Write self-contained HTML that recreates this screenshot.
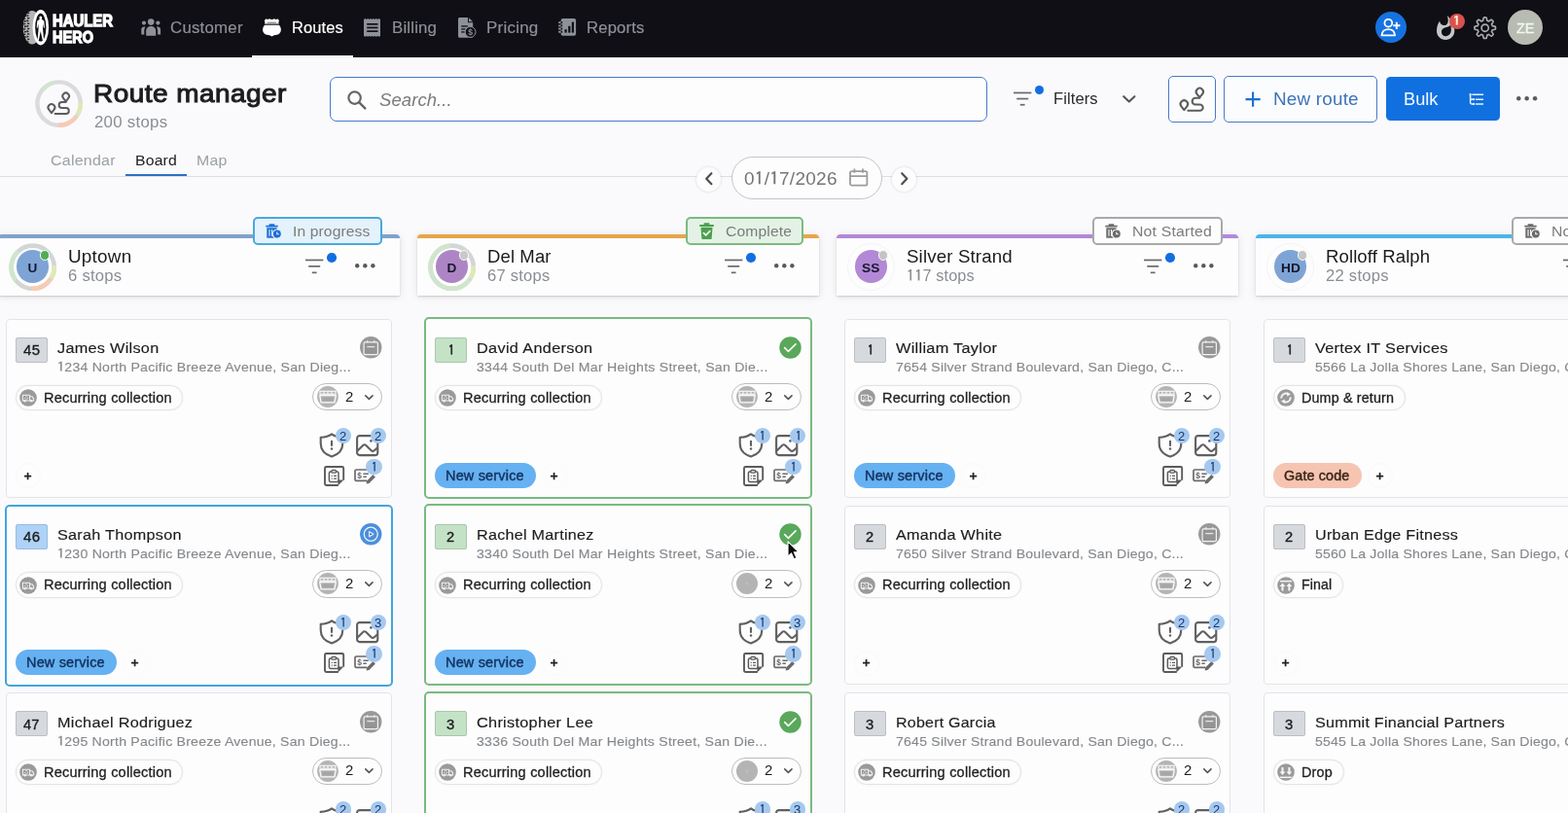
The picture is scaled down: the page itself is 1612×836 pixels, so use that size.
<!DOCTYPE html><html lang="en"><head><meta charset="utf-8"><title>Route manager</title><style>
*{margin:0;padding:0}
html,body{width:1612px;height:836px;overflow:hidden;background:#fafafc}
body{position:relative;font-family:"Liberation Sans",sans-serif;-webkit-font-smoothing:antialiased}
#app{position:absolute;left:0;top:0;width:1612px;height:836px;overflow:hidden;will-change:transform}
.b,.t,.ic{position:absolute;display:block}
.b{box-sizing:content-box}
.ic{overflow:visible}
.t{white-space:pre;line-height:1;font-weight:normal;transform-origin:0 50%}
h1.t,h2.t,h3.t{font-weight:normal}
.lg{font-weight:bold;color:#fff;-webkit-text-stroke:1.3px #fff;letter-spacing:0}
.card{background:#fdfdfe;box-sizing:border-box}
.o{font-family:"IPAGothic","Liberation Sans",sans-serif;font-style:inherit;line-height:0;-webkit-text-stroke-width:calc(var(--sw,0px) + .25px)}
.navi{text-decoration:none}
</style></head><body><div id="app"><nav class="b" style="left:0;top:0;width:1612px;height:59px;background:#0f0f15"><div class="b logo" style="left:0;top:0;width:130px;height:59px"><svg class="ic" style="left:23px;top:9px" width="28" height="38" viewBox="0 0 28 38">
<ellipse cx="10" cy="19.200" rx="9.200" ry="17.300" fill="#b4b4b4"/>
<g fill="#0f0f15"><path d="M1.3 3.6l2.500 1.150l-2.500 1.150z"/><path d="M5.3 3.2l2.500 1.150l-2.500 1.150z"/><path d="M2.1 6.300000000000001l2.500 1.150l-2.500 1.150z"/><path d="M4.5 5.9l2.500 1.150l-2.500 1.150z"/><path d="M1.3 9.0l2.500 1.150l-2.500 1.150z"/><path d="M5.3 8.600000000000001l2.500 1.150l-2.500 1.150z"/><path d="M2.1 11.700000000000001l2.500 1.150l-2.500 1.150z"/><path d="M4.5 11.3l2.500 1.150l-2.500 1.150z"/><path d="M1.3 14.4l2.500 1.150l-2.500 1.150z"/><path d="M5.3 14.0l2.500 1.150l-2.500 1.150z"/><path d="M2.1 17.1l2.500 1.150l-2.500 1.150z"/><path d="M4.5 16.7l2.500 1.150l-2.500 1.150z"/><path d="M1.3 19.800000000000004l2.500 1.150l-2.500 1.150z"/><path d="M5.3 19.400000000000002l2.500 1.150l-2.500 1.150z"/><path d="M2.1 22.500000000000004l2.500 1.150l-2.500 1.150z"/><path d="M4.5 22.1l2.500 1.150l-2.500 1.150z"/><path d="M1.3 25.200000000000003l2.500 1.150l-2.500 1.150z"/><path d="M5.3 24.8l2.500 1.150l-2.500 1.150z"/><path d="M2.1 27.900000000000002l2.500 1.150l-2.500 1.150z"/><path d="M4.5 27.5l2.500 1.150l-2.500 1.150z"/><path d="M1.3 30.6l2.500 1.150l-2.500 1.150z"/><path d="M5.3 30.2l2.500 1.150l-2.500 1.150z"/><path d="M2.1 33.300000000000004l2.500 1.150l-2.500 1.150z"/><path d="M4.5 32.900000000000006l2.500 1.150l-2.500 1.150z"/></g>
<ellipse cx="18.800" cy="19.200" rx="8.300" ry="18.200" fill="#fff"/>
<ellipse cx="18.800" cy="19.200" rx="5.600" ry="14.400" fill="#0f0f15"/>
<path transform="translate(18.800 7.600) scale(.92 1.150) translate(-18.700 -7.800)" d="M18.700 7.800c.9 0 1.500 .7 1.500 1.600c0 .6-.2 1.100-.6 1.400c1.500 .3 2.500 .9 3 1.800l.6 5.600l-1 .2l-.8-3.700l-.3 4.400l1.200 10.400h-1.500l-2.100-8.400l-2.100 8.400h-1.500l1.200-10.400l-.3-4.400l-.8 3.700l-1-.2l.6-5.600c.5-.9 1.500-1.500 3-1.800c-.4-.3-.6-.8-.6-1.400c0-.9 .6-1.600 1.500-1.600z" fill="#fff"/>
</svg><span class="t lg" style="left:53.500px;top:12px;line-height:19px;font-size:16.700px;transform:scaleX(0.890)">HAULER</span><span class="t lg" style="left:53.500px;top:29px;line-height:19px;font-size:16.900px;transform:scaleX(0.860)">HERO</span></div><a class="navi"><svg class="ic" style="left:144.8px;top:19.3px" width="20.4" height="18" viewBox="0 0 20.4 18" ><circle cx="10.2" cy="3.6" r="3.3" fill="#8f9198"/><path d="M5.2 17.8v-5.1c0-2.7 2.2-4.6 5-4.6s5 1.9 5 4.6v5.1z" fill="#8f9198"/><circle cx="3" cy="4.6" r="2.1" fill="#8f9198"/><circle cx="17.4" cy="4.6" r="2.1" fill="#8f9198"/><path d="M0.3 16.4v-5.2c0-1.7 1.2-2.8 2.9-2.8c.5 0 1 .1 1.400 .3c-.8 1-1.300 2.400-1.300 4v3.700z" fill="#8f9198"/><path d="M20.100 16.400v-5.200c0-1.700-1.200-2.800-2.900-2.800c-.5 0-1 .1-1.400 .3c.8 1 1.300 2.400 1.300 4v3.700z" fill="#8f9198"/></svg><span class="t" style="left:175.20px;top:19px;line-height:18px;font-size:16.3px;color:#8f9198;letter-spacing:0.201px;transform:scaleX(1.0353);-webkit-text-stroke:0.15px #8f9198;--sw:0.15px;">Customer</span></a><a class="navi"><svg class="ic" style="left:270px;top:18.7px" width="19" height="18.5" viewBox="0 0 19 18.5" ><path d="M3.6 0.300c1 .9 2.300 .9 3.300 0c1.600 1.100 3.500 1.100 5.100 0c1 .9 2.300 .9 3.300 0l1.800 1.900c-.9 1-.9 2.200-.2 3.300h-15c.7-1.100 .7-2.300-.2-3.300z" fill="#fff"/><rect x="4.800" y="3.600" width="9.200" height="1.900" fill="#9a9a9a"/><path d="M2 6.700h15c2.700 3.300 2.500 7.400-.6 9.500c-2.100 .9-4.700 .7-6.900 2.200c-2.200-1.500-4.800-1.300-6.900-2.200c-3.100-2.100-3.300-6.200-.6-9.500z" fill="#fff"/></svg><span class="t" style="left:300.00px;top:19px;line-height:18px;font-size:16.3px;color:#ffffff;letter-spacing:0.076px;transform:scaleX(1.0134);-webkit-text-stroke:0.15px #ffffff;--sw:0.15px;">Routes</span></a><a class="navi"><svg class="ic" style="left:374.1px;top:18.8px" width="17" height="18.8" viewBox="0 0 17 18.8" ><path d="M0 0.9 L1.42 0 L2.83 0.9 L4.25 0 L5.67 0.9 L7.08 0 L8.50 0.9 L9.92 0 L11.33 0.9 L12.75 0 L14.17 0.9 L15.58 0 L17.00 0.9 L17 17.9 L15.58 18.8 L14.17 17.9 L12.75 18.8 L11.33 17.9 L9.92 18.8 L8.50 17.9 L7.08 18.8 L5.67 17.9 L4.25 18.8 L2.83 17.9 L1.42 18.8 L0.00 17.9 Z" fill="#8f9198"/><rect x="3.200" y="5" width="11.300" height="1.700" fill="#0f0f15"/><rect x="3.200" y="8.600" width="11.300" height="1.700" fill="#0f0f15"/><rect x="3.200" y="12.300" width="11.300" height="1.700" fill="#0f0f15"/></svg><span class="t" style="left:403.30px;top:19px;line-height:18px;font-size:16.3px;color:#8f9198;letter-spacing:0.15px;transform:scaleX(1.0375);-webkit-text-stroke:0.15px #8f9198;--sw:0.15px;">Billing</span></a><a class="navi"><svg class="ic" style="left:471.3px;top:18px" width="18.6" height="21" viewBox="0 0 18.600 21" ><path d="M1.500 0h8.500v5.200h5.200v14c0 .8-.7 1.500-1.500 1.500h-12.200c-.8 0-1.500-.7-1.500-1.500v-17.700c0-.8 .7-1.500 1.500-1.500z" fill="#8f9198"/><path d="M11 0.300l4 4h-4z" fill="#8f9198"/><rect x="3.200" y="8.300" width="6.600" height="1.300" fill="#0f0f15"/><rect x="3.200" y="11.300" width="4.200" height="1.300" fill="#0f0f15"/><rect x="3.200" y="14.300" width="3.600" height="1.300" fill="#0f0f15"/><circle cx="12.600" cy="14.900" r="5.400" fill="#0f0f15" stroke="#8f9198" stroke-width="1"/><text x="12.600" y="18.100" font-family="Liberation Sans, sans-serif" font-weight="bold" font-size="8.500" text-anchor="middle" fill="#8f9198">$</text></svg><span class="t" style="left:499.80px;top:19px;line-height:18px;font-size:16.3px;color:#8f9198;letter-spacing:0.203px;transform:scaleX(1.0448);-webkit-text-stroke:0.15px #8f9198;--sw:0.15px;">Pricing</span></a><a class="navi"><svg class="ic" style="left:573.5px;top:19.3px" width="18.1" height="17.8" viewBox="0 0 18.100 17.800" ><rect x="2.600" y="0" width="15.500" height="17.800" rx="2" fill="#8f9198"/><rect x="0" y="3.2" width="3.400" height="1.900" rx="0.900" fill="#8f9198"/><rect x="2.600" y="3.2" width="1.600" height="1.900" fill="#0f0f15"/><rect x="0" y="6.4" width="3.400" height="1.900" rx="0.900" fill="#8f9198"/><rect x="2.600" y="6.4" width="1.600" height="1.900" fill="#0f0f15"/><rect x="0" y="9.6" width="3.400" height="1.900" rx="0.900" fill="#8f9198"/><rect x="2.600" y="9.6" width="1.600" height="1.900" fill="#0f0f15"/><rect x="0" y="12.8" width="3.400" height="1.900" rx="0.900" fill="#8f9198"/><rect x="2.600" y="12.8" width="1.600" height="1.900" fill="#0f0f15"/><rect x="6.500" y="11.200" width="2.200" height="3.400" fill="#0f0f15"/><rect x="10.200" y="7.800" width="2.200" height="6.800" fill="#0f0f15"/><rect x="13.800" y="3.600" width="2.200" height="11" fill="#0f0f15"/></svg><span class="t" style="left:603.20px;top:19px;line-height:18px;font-size:16.3px;color:#8f9198;letter-spacing:0.137px;transform:scaleX(1.0260);-webkit-text-stroke:0.15px #8f9198;--sw:0.15px;">Reports</span></a><div class="b" style="left:259px;top:57px;width:104px;height:3px;background:#f7f7f9"></div><svg class="ic" style="left:1414.4px;top:12px" width="32" height="32" viewBox="0 0 32 32" ><circle cx="16" cy="16" r="16" fill="#1672e0"/><circle cx="13.300" cy="11.700" r="3.900" fill="none" stroke="#fff" stroke-width="1.800"/><path d="M6.500 24.400c.4-4 3.200-6.200 6.800-6.200s6.400 2.200 6.800 6.200z" fill="none" stroke="#fff" stroke-width="1.800" stroke-linejoin="round"/><path d="M21.800 10.700v7.200M18.200 14.300h7.200" stroke="#fff" stroke-width="1.900" fill="none"/></svg><svg class="ic" style="left:1476.8px;top:16px" width="18.3" height="25" viewBox="0 0 18.300 25" ><path d="M3 5.800C3.500 8.600 5.400 10.100 7.600 10.100C10.400 10.100 12 7.700 11.700 4.400C11.600 2.800 11.300 1.400 10.800 0C14.400 3.400 18.300 8.600 18.300 15.800C18.300 21 14.200 25 9.150 25C4.100 25 0 21 0 15.800C0 11.600 1.400 8.200 3 5.800ZM9.400 21.200C6.800 21.200 4.900 19.400 4.900 17C4.900 14.400 6.700 12.700 9.800 12.100C11.600 11.700 13.200 10.900 14.300 9.700C14.700 11.300 14.900 12.900 14.900 14.600C14.900 18.400 12.600 21.200 9.400 21.200Z" fill="#c3c7c7" fill-rule="evenodd"/></svg><div class="b" style="left:1490px;top:13.5px;width:16.2px;height:16.2px;background:#d8524c;border-radius:50%"></div><span class="t" style="left:1493.80px;top:14px;line-height:15px;font-size:13px;color:#fff4e0;transform:scaleX(1.0646);-webkit-text-stroke:0.3px #fff4e0;--sw:0.3px;"><i class="o">1</i></span><svg class="ic" style="left:1515.2px;top:16.5px" width="23.4" height="23.4" viewBox="0 0 24 24" ><path d="M12.00 0.95L12.43 0.96L12.87 0.98L13.30 1.03L13.61 1.81L13.85 2.68L14.03 3.55L14.16 4.35L14.46 4.44L14.75 4.54L15.04 4.66L15.33 4.78L15.61 4.92L15.89 5.06L16.54 4.59L17.28 4.10L18.06 3.66L18.84 3.32L19.18 3.60L19.50 3.89L19.81 4.19L20.11 4.50L20.40 4.82L20.68 5.16L20.34 5.94L19.90 6.72L19.41 7.46L18.94 8.11L19.08 8.39L19.22 8.67L19.34 8.96L19.46 9.25L19.56 9.54L19.65 9.84L20.45 9.97L21.32 10.15L22.19 10.39L22.97 10.70L23.02 11.13L23.04 11.57L23.05 12.00L23.04 12.43L23.02 12.87L22.97 13.30L22.19 13.61L21.32 13.85L20.45 14.03L19.65 14.16L19.56 14.46L19.46 14.75L19.34 15.04L19.22 15.33L19.08 15.61L18.94 15.89L19.41 16.54L19.90 17.28L20.34 18.06L20.68 18.84L20.40 19.18L20.11 19.50L19.81 19.81L19.50 20.11L19.18 20.40L18.84 20.68L18.06 20.34L17.28 19.90L16.54 19.41L15.89 18.94L15.61 19.08L15.33 19.22L15.04 19.34L14.75 19.46L14.46 19.56L14.16 19.65L14.03 20.45L13.85 21.32L13.61 22.19L13.30 22.97L12.87 23.02L12.43 23.04L12.00 23.05L11.57 23.04L11.13 23.02L10.70 22.97L10.39 22.19L10.15 21.32L9.97 20.45L9.84 19.65L9.54 19.56L9.25 19.46L8.96 19.34L8.67 19.22L8.39 19.08L8.11 18.94L7.46 19.41L6.72 19.90L5.94 20.34L5.16 20.68L4.82 20.40L4.50 20.11L4.19 19.81L3.89 19.50L3.60 19.18L3.32 18.84L3.66 18.06L4.10 17.28L4.59 16.54L5.06 15.89L4.92 15.61L4.78 15.33L4.66 15.04L4.54 14.75L4.44 14.46L4.35 14.16L3.55 14.03L2.68 13.85L1.81 13.61L1.03 13.30L0.98 12.87L0.96 12.43L0.95 12.00L0.96 11.57L0.98 11.13L1.03 10.70L1.81 10.39L2.68 10.15L3.55 9.97L4.35 9.84L4.44 9.54L4.54 9.25L4.66 8.96L4.78 8.67L4.92 8.39L5.06 8.11L4.59 7.46L4.10 6.72L3.66 5.94L3.32 5.16L3.60 4.82L3.89 4.50L4.19 4.19L4.50 3.89L4.82 3.60L5.16 3.32L5.94 3.66L6.72 4.10L7.46 4.59L8.11 5.06L8.39 4.92L8.67 4.78L8.96 4.66L9.25 4.54L9.54 4.44L9.84 4.35L9.97 3.55L10.15 2.68L10.39 1.81L10.70 1.03L11.13 0.98L11.57 0.96Z" fill="none" stroke="#a9adad" stroke-width="1.700" stroke-linejoin="round"/><circle cx="12" cy="12" r="3.700" fill="none" stroke="#a9adad" stroke-width="1.700"/></svg><div class="b" style="left:1550.3px;top:9.6px;width:36px;height:36px;background:#b7bbb2;border-radius:50%"></div><span class="t" style="left:1559.25px;top:21px;line-height:16px;font-size:14.8px;color:#f1f8ec;letter-spacing:-0.106px;transform:scaleX(0.9835);-webkit-text-stroke:0.3px #f1f8ec;--sw:0.3px;">ZE</span></nav><header class="b" style="left:0;top:59px;width:1612px;height:150px"><svg class="ic" style="left:33.90px;top:20.60px;filter:blur(.35px)" width="53.2" height="53.2" viewBox="0 0 53.2 53.2"><circle cx="26.6" cy="26.6" r="22.2" fill="none" stroke="#d9dbdc" stroke-width="4.4"/><path d="M10.10 11.75A22.2 22.2 0 0 1 19.74 5.49" fill="none" stroke="#cfe6cc" stroke-width="4.4"/><path d="M48.79 25.83A22.2 22.2 0 0 1 45.83 37.70" fill="none" stroke="#e0e9b4" stroke-width="4.4"/><path d="M44.56 39.65A22.2 22.2 0 0 1 25.83 48.79" fill="none" stroke="#f8cbb4" stroke-width="4.4"/></svg><svg class="ic" style="left:48.2px;top:34.8px" width="24" height="24" viewBox="0 0 24 24" ><g fill="none" stroke="#5c5c5c" stroke-width="2.0" stroke-linecap="round" stroke-linejoin="round"><path d="M4.95 22.19L7.66 18.73A3.45 3.45 0 1 0 2.24 18.73Z"/><path d="M19.70 10.33L22.34 6.97A3.35 3.35 0 1 0 17.06 6.97Z"/><path d="M19.700 10.900H15.700a3.100 3.100 0 0 0 0 6.200H19.900a2.900 2.900 0 0 1 0 5.800H8.600"/></g></svg><h1 class="t" style="left:96.00px;top:22px;line-height:30px;font-size:26.6px;color:#1d1d1f;letter-spacing:0.454px;transform:scaleX(1.0507);-webkit-text-stroke:1.05px #1d1d1f;--sw:1.05px;">Route manager</h1><span class="t" style="left:97.20px;top:58px;line-height:17px;font-size:15.9px;color:#8a8e93;letter-spacing:0.273px;transform:scaleX(1.0564);">200 stops</span><div class="b" style="left:339px;top:20px;width:676px;height:46px;background:#fdfdfe;border:1px solid #4a7ac6;border-radius:7px;box-sizing:border-box"></div><svg class="ic" style="left:357.3px;top:33.599999999999994px" width="19.5" height="19.5" viewBox="0 0 19.500 19.500" ><circle cx="7.600" cy="7.600" r="6.200" fill="none" stroke="#666" stroke-width="2.200"/><path d="M12.300 12.300l6 6" stroke="#666" stroke-width="2.500" stroke-linecap="round"/></svg><span class="t" style="left:389.80px;top:33px;line-height:21px;font-size:18.27px;color:#7b7b7b;letter-spacing:0.073px;transform:scaleX(1.0136);font-style:italic;">Search...</span><svg class="ic" style="left:1041.7px;top:34.8px" width="18.4" height="16" viewBox="0 0 18.400 16" ><rect x="0" y="0.6" width="18.400" height="1.700" fill="#6a6a6a"/><rect x="3.200" y="6.7" width="12" height="1.700" fill="#6a6a6a"/><rect x="6.800" y="12.9" width="4.800" height="1.700" fill="#6a6a6a"/></svg><div class="b" style="left:1063.9px;top:28.599999999999994px;width:9.6px;height:9.6px;background:#126ee0;border-radius:50%"></div><span class="t" style="left:1083.00px;top:33px;line-height:18px;font-size:16.24px;color:#2a2a2a;letter-spacing:0.079px;transform:scaleX(1.0192);">Filters</span><svg class="ic" style="left:1154.2px;top:38.599999999999994px" width="13.6" height="7.8" viewBox="0 0 13.300 7.600" ><path d="M1.200 1.200l5.450 5.200l5.450-5.200" fill="none" stroke="#555" stroke-width="2.1" stroke-linecap="round" stroke-linejoin="round"/></svg><div class="b" style="left:1201px;top:19px;width:48.5px;height:48px;border:1px solid #4a7ac6;border-radius:5px;box-sizing:border-box;background:#fbfcfd"></div><svg class="ic" style="left:1212.2px;top:30.400000000000006px" width="26" height="26" viewBox="0 0 24 24" ><g fill="none" stroke="#5c5c5c" stroke-width="1.9" stroke-linecap="round" stroke-linejoin="round"><path d="M4.95 22.19L7.66 18.73A3.45 3.45 0 1 0 2.24 18.73Z"/><path d="M19.70 10.33L22.34 6.97A3.35 3.35 0 1 0 17.06 6.97Z"/><path d="M19.700 10.900H15.700a3.100 3.100 0 0 0 0 6.200H19.900a2.900 2.900 0 0 1 0 5.800H8.600"/></g></svg><div class="b" style="left:1258px;top:19px;width:157.5px;height:48px;border:1px solid #4a7ac6;border-radius:5px;box-sizing:border-box;background:#fbfcfd"></div><svg class="ic" style="left:1279.6px;top:34.7px" width="16.2" height="16.2" viewBox="0 0 16 16" ><path d="M8 0.500v15M0.500 8h15" stroke="#1a6fd8" stroke-width="2.1" fill="none"/></svg><span class="t" style="left:1308.80px;top:32px;line-height:21px;font-size:18.27px;color:#3d73b8;letter-spacing:0.196px;transform:scaleX(1.0328);">New route</span><div class="b" style="left:1424.8px;top:20px;width:117.6px;height:44.6px;background:#1170e0;border-radius:4.500px"></div><span class="t" style="left:1443.30px;top:32px;line-height:21px;font-size:18.27px;color:#f3f8ff;letter-spacing:-0.015px;transform:scaleX(0.9975);">Bulk</span><svg class="ic" style="left:1510.2px;top:36.599999999999994px" width="15.4" height="12" viewBox="0 0 15.400 12" ><g fill="none" stroke="#e6f1ff" stroke-width="1.500" stroke-linecap="round"><path d="M1.600 0.900v8.600a1.400 1.400 0 0 0 1.400 1.400h1.600M1.600 4.800a1.400 1.400 0 0 0 1.400 1.400h1.600"/><path d="M3.900 1.300h10.600M7.400 6.200h7.100M7.400 10.900h7.100"/></g><circle cx="5" cy="6.200" r="1.150" fill="#e6f1ff"/><circle cx="5" cy="10.900" r="1.150" fill="#e6f1ff"/><circle cx="1.600" cy="1" r="1.100" fill="#e6f1ff"/></svg><svg class="ic" style="left:1559px;top:40.099999999999994px" width="21.3" height="4.5" viewBox="0 0 21.3 4.5" ><circle cx="2.25" cy="2.25" r="2.25" fill="#5a5a5a"/><circle cx="10.65" cy="2.25" r="2.25" fill="#5a5a5a"/><circle cx="19.05" cy="2.25" r="2.25" fill="#5a5a5a"/></svg><div class="b" style="left:0px;top:122px;width:1612px;height:1px;background:#dcdee1"></div><span class="t" style="left:52.10px;top:97px;line-height:17px;font-size:15.3px;color:#9ba0a5;letter-spacing:0.221px;transform:scaleX(1.0447);">Calendar</span><span class="t" style="left:138.70px;top:97px;line-height:17px;font-size:15.3px;color:#222;letter-spacing:0.168px;transform:scaleX(1.0319);">Board</span><span class="t" style="left:201.60px;top:97px;line-height:17px;font-size:15.3px;color:#9ba0a5;letter-spacing:0.248px;transform:scaleX(1.0390);">Map</span><div class="b" style="left:129px;top:120px;width:63px;height:2.4px;background:#2f6fc4"></div><div class="b" style="left:716.4px;top:112.5px;width:25px;height:25px;background:#fdfdfd;border-radius:50%;box-shadow:0 0 3px rgba(0,0,0,.16)"></div><svg class="ic" style="left:724.6px;top:118.4px" width="7.6" height="13.4" viewBox="0 0 7.600 13.400" ><path d="M6.400 1.200l-5.200 5.500l5.200 5.500" fill="none" stroke="#505050" stroke-width="2.200" stroke-linecap="round" stroke-linejoin="round"/></svg><div class="b" style="left:751.5px;top:102.30000000000001px;width:155.5px;height:43.8px;background:#fdfdfd;border:1px solid #c4c4c4;border-radius:22px;box-sizing:border-box"></div><span class="t" style="left:765.00px;top:114px;line-height:21px;font-size:18.27px;color:#767676;letter-spacing:0.245px;transform:scaleX(1.0429);">0<i class="o">1</i>/<i class="o">1</i>7/2026</span><svg class="ic" style="left:872.6px;top:114.30000000000001px" width="19.4" height="18.7" viewBox="0 0 19.400 18.700" ><rect x="1" y="3.100" width="17.400" height="14.600" rx="1.800" fill="none" stroke="#9c9c9c" stroke-width="1.800"/><path d="M1 8.200h17.400M5.400 0.600v4.200M14 0.600v4.200" stroke="#9c9c9c" stroke-width="1.800" fill="none"/></svg><div class="b" style="left:916.9px;top:112.5px;width:25px;height:25px;background:#fdfdfd;border-radius:50%;box-shadow:0 0 3px rgba(0,0,0,.16)"></div><svg class="ic" style="left:926px;top:118.4px" width="7.6" height="13.4" viewBox="0 0 7.600 13.400" ><path d="M1.200 1.200l5.200 5.500l-5.200 5.500" fill="none" stroke="#505050" stroke-width="2.200" stroke-linecap="round" stroke-linejoin="round"/></svg></header><main class="b" style="left:0;top:209px;width:1612px;height:627px"><section class="b col" style="left:-2px;top:0;width:413px;height:627px"><div class="b" style="left:0px;top:32px;width:413px;height:63.3px;background:#fdfdfe;border-radius:4px 4px 0 0;box-shadow:0 1px 2px rgba(0,0,0,.15),0 1px 9px rgba(0,0,0,.1)"></div><div class="b" style="left:0px;top:31.80000000000001px;width:413px;height:4.4px;background:#7fa2cc;border-radius:4px 4px 0 0"></div><svg class="ic" style="left:8.80px;top:38.60px;filter:blur(.35px)" width="53.400000000000006" height="53.400000000000006" viewBox="0 0 53.400000000000006 53.400000000000006"><circle cx="26.700000000000003" cy="26.700000000000003" r="22.1" fill="none" stroke="#d3d5d6" stroke-width="4.6"/><path d="M48.75 25.16A22.1 22.1 0 0 1 45.44 38.41" fill="none" stroke="#e0e9b4" stroke-width="4.6"/><path d="M44.58 39.69A22.1 22.1 0 0 1 25.16 48.75" fill="none" stroke="#f8cbb4" stroke-width="4.6"/><path d="M9.28 40.31A22.1 22.1 0 0 1 11.91 10.28" fill="none" stroke="#cfe6cc" stroke-width="4.6"/></svg><div class="b" style="left:18.8px;top:48.40000000000001px;width:33.4px;height:33.4px;background:#7ea4d6;border-radius:50%"></div><div class="b" style="left:43.0px;top:48.30000000000001px;width:10.4px;height:10.4px;background:#4fae53;border-radius:50%;border:1.500px solid #f8faf8;box-sizing:border-box"></div><span class="t" style="left:30.60px;top:59px;line-height:15px;font-size:13.6px;color:#16182a;font-weight:bold;">U</span><h2 class="t" style="left:72.00px;top:44px;line-height:21px;font-size:18.27px;color:#1b1b1d;letter-spacing:0.223px;transform:scaleX(1.0335);">Uptown</h2><span class="t" style="left:72.20px;top:66px;line-height:17px;font-size:15.9px;color:#8a8e93;letter-spacing:0.227px;transform:scaleX(1.0488);">6 stops</span><svg class="ic" style="left:316.2px;top:56.89999999999998px" width="18.4" height="16" viewBox="0 0 18.400 16" ><rect x="0" y="0.6" width="18.400" height="1.700" fill="#6a6a6a"/><rect x="3.200" y="7.0" width="12" height="1.700" fill="#6a6a6a"/><rect x="6.800" y="13.5" width="4.800" height="1.700" fill="#6a6a6a"/></svg><div class="b" style="left:338.3px;top:51.10000000000002px;width:9.6px;height:9.6px;background:#126ee0;border-radius:50%"></div><svg class="ic" style="left:366.7px;top:62.19999999999999px" width="20.6" height="4.4" viewBox="0 0 20.6 4.4" ><circle cx="2.2" cy="2.2" r="2.2" fill="#5a5a5a"/><circle cx="10.3" cy="2.2" r="2.2" fill="#5a5a5a"/><circle cx="18.4" cy="2.2" r="2.2" fill="#5a5a5a"/></svg><div class="b" style="left:262px;top:13.599999999999994px;width:133px;height:29px;background:#e4f2fb;border:2px solid #49a9dc;border-radius:5px;box-sizing:border-box"></div><svg class="ic" style="left:274.8px;top:20.80000000000001px" width="16.6" height="15.4" viewBox="0 0 16.600 15.400" ><path d="M0.300 2.700h12.400M3.700 1.100h5.600" stroke="#1a6fd8" stroke-width="1.700" fill="none"/><path d="M1.300 4.300h10.400v10.400h-10.400z" fill="#1a6fd8"/><path d="M4 6v6.800M6.600 6v6.800" stroke="#e4f2fb" stroke-width="1.100"/><circle cx="11.800" cy="10.600" r="4.600" fill="#1a6fd8" stroke="#e4f2fb" stroke-width="1.200"/><path d="M11.800 8.400v2.400h2" stroke="#e4f2fb" stroke-width="1.100" fill="none"/></svg><span class="t" style="left:303.40px;top:20px;line-height:17px;font-size:15.22px;color:#7c7c7c;letter-spacing:0.116px;transform:scaleX(1.0257);">In progress</span><article class="b card" style="left:8px;top:119px;width:397px;height:184px;border:1px solid #e2e4e7;border-radius:4px"><div class="b" style="left:9px;top:17.6px;width:33px;height:26.3px;background:#d6dade;border:1px solid #bcbfc3;border-radius:2px;box-sizing:border-box"></div><span class="t" style="left:17.02px;top:23px;line-height:16px;font-size:14.0px;color:#1c1c1e;letter-spacing:0.324px;transform:scaleX(1.0666);-webkit-text-stroke:0.35px #1c1c1e;--sw:0.35px;">45</span><h3 class="t" style="left:51.90px;top:20px;line-height:17px;font-size:15.4px;color:#1d1d1f;letter-spacing:0.274px;transform:scaleX(1.0543);-webkit-text-stroke:0.15px #1d1d1f;--sw:0.15px;">James Wilson</h3><span class="t" style="left:51.90px;top:41px;line-height:15px;font-size:13.4px;color:#85888b;letter-spacing:0.212px;transform:scaleX(1.0546);-webkit-text-stroke:0.12px #85888b;--sw:0.12px;"><i class="o">1</i>234 North Pacific Breeze Avenue, San Dieg...</span><svg class="ic" style="left:363.3px;top:17.1px" width="22.5" height="22.5" viewBox="0 0 22.500 22.500" ><circle cx="11.250" cy="11.250" r="11.200" fill="#999999"/><rect x="4.100" y="5.900" width="14.300" height="12.700" rx="1.300" fill="#949494" stroke="#f3f3f3" stroke-width="1.200"/><path d="M7.300 10.600h8" stroke="#e6e6e6" stroke-width="1.300"/><path d="M7.700 4.300v1.900M14.800 4.300v1.900" stroke="#f0f0f0" stroke-width="1.300"/></svg><div class="b" style="left:9px;top:67.2px;width:172px;height:26.3px;background:#fdfdfd;border:1px solid #e4e4e4;border-radius:14px;box-sizing:border-box;box-shadow:0 0 2px rgba(0,0,0,.08)"></div><svg class="ic" style="left:13.1px;top:71.3px" width="18" height="18" viewBox="0 0 18 18" ><circle cx="9" cy="9" r="8.800" fill="#9a9a9a"/><g fill="none" stroke="#f1f1f1" stroke-width="1.050" stroke-linejoin="round"><path d="M3.400 6.200h7.200v5.800h-7.200z"/><path d="M10.600 7.700h2.300l1.700 2.100v2.200h-4"/></g><circle cx="5.700" cy="12.300" r="1.250" fill="#f1f1f1"/><circle cx="12.300" cy="12.300" r="1.250" fill="#f1f1f1"/><circle cx="7" cy="9.100" r="1.500" fill="none" stroke="#f1f1f1" stroke-width="0.900" stroke-dasharray="1.700 1"/></svg><span class="t" style="left:38.20px;top:72px;line-height:16px;font-size:13.9px;color:#1f1f21;letter-spacing:0.187px;transform:scaleX(1.0483);-webkit-text-stroke:0.3px #1f1f21;--sw:0.3px;">Recurring collection</span><div class="b" style="left:314.2px;top:64.9px;width:71.8px;height:28.6px;background:#fdfdfd;border:1px solid #bbbebe;border-radius:15px;box-sizing:border-box"></div><svg class="ic" style="left:318.8px;top:68.0px" width="22" height="22" viewBox="0 0 22 22" ><circle cx="11" cy="11" r="10.900" fill="#b4b4b4"/><g fill="none" stroke="#fafafa" stroke-width="1.100"><rect x="3" y="5.300" width="16" height="2.900"/><path d="M7 5.300v2.900M11 5.300v2.900M15 5.300v2.900"/></g><path d="M2.700 9.600h16.600l-1.400 7.300h-13.800z" fill="none" stroke="#fafafa" stroke-width="1.300" stroke-linejoin="round"/><rect x="5.400" y="11.400" width="11.200" height="3.900" fill="#a6a6a6"/></svg><span class="t" style="left:347.60px;top:71px;line-height:16px;font-size:14.7px;color:#1d1d1f;transform:scaleX(1.0167);">2</span><svg class="ic" style="left:367.9px;top:76.6px" width="8.8" height="5.2" viewBox="0 0 13.300 7.600" ><path d="M1.200 1.200l5.450 5.200l5.450-5.200" fill="none" stroke="#555" stroke-width="2.5" stroke-linecap="round" stroke-linejoin="round"/></svg><svg class="ic" style="left:321.3px;top:115.9px" width="26" height="25.6" viewBox="0 0 26 25.600" ><path d="M13 1.300c3.200 2.400 6.600 3.200 11.300 3.500v6.200c0 6.200-4.300 11.300-11.300 13.500c-7-2.200-11.300-7.300-11.300-13.500v-6.200c4.700-.3 8.100-1.100 11.300-3.500z" fill="none" stroke="#606060" stroke-width="2.100" stroke-linejoin="round"/><path d="M13 8.800v4.200" stroke="#606060" stroke-width="2.100" stroke-linecap="round"/><circle cx="13" cy="16.600" r="1.250" fill="#606060"/></svg><svg class="ic" style="left:358.6px;top:117.9px" width="23.4" height="22.2" viewBox="0 0 23.400 22.200" ><rect x="1.100" y="1.100" width="21.200" height="20" rx="2.600" fill="none" stroke="#606060" stroke-width="2.100"/><path d="M1.600 16.400l5.800-5.600c.8-.8 1.900-.8 2.700 0l5.300 5.200c1 1 2.400 1.100 3.400 .2l3.300-2.800" fill="none" stroke="#606060" stroke-width="2.100" stroke-linejoin="round"/><circle cx="15.400" cy="6.400" r="1.300" fill="#606060"/></svg><svg class="ic" style="left:326px;top:149.7px" width="21.2" height="21.0" viewBox="0 0 21.200 21" ><path d="M20.200 14.800v-12.400c0-.8-.6-1.400-1.400-1.400h-16.400c-.8 0-1.400 .6-1.400 1.400v16.200c0 .8 .6 1.400 1.400 1.400h12.400" fill="none" stroke="#5a5a5a" stroke-width="1.900"/><path d="M14.400 20.400l6-6h-4.600c-.8 0-1.400 .6-1.400 1.400z" fill="#5a5a5a"/><rect x="5.400" y="6.100" width="9.600" height="10.300" rx="1.400" fill="none" stroke="#5a5a5a" stroke-width="1.500"/><rect x="7.900" y="4.500" width="4.600" height="2.700" rx="1" fill="#fdfdfd" stroke="#5a5a5a" stroke-width="1.300"/><path d="M7.700 10.300h1.100M10 10.300h3M7.700 13.200h1.100M10 13.200h3" stroke="#5a5a5a" stroke-width="1.300"/></svg><svg class="ic" style="left:357.2px;top:152.7px" width="22" height="15.6" viewBox="0 0 22 15.600" ><path d="M13.200 12.300h-11c-.7 0-1.200-.5-1.200-1.200v-8.900c0-.7 .5-1.200 1.200-1.200h15.600c.7 0 1.200 .5 1.200 1.200v2.400" fill="none" stroke="#6a6a6a" stroke-width="1.700"/><text x="5.700" y="9.800" font-family="Liberation Sans, sans-serif" font-weight="bold" font-size="8.500" text-anchor="middle" fill="#6a6a6a">$</text><path d="M9.400 5.300h5.400M9.400 8.300h3.400" stroke="#6a6a6a" stroke-width="1.400"/><path d="M12.600 15.400l.5-2.900l6.400-6.400l2.400 2.400l-6.400 6.400z" fill="#6a6a6a"/></svg><div class="b" style="left:337.7px;top:110.8px;width:16.4px;height:16.4px;background:#a5c8ef;border-radius:50%"></div><span class="t" style="left:342.30px;top:112px;line-height:15px;font-size:13.19px;color:#17386f;transform:scaleX(0.9883);">2</span><div class="b" style="left:373.8px;top:110.8px;width:16.4px;height:16.4px;background:#a5c8ef;border-radius:50%"></div><span class="t" style="left:378.40px;top:112px;line-height:15px;font-size:13.19px;color:#17386f;transform:scaleX(0.9883);">2</span><div class="b" style="left:369.3px;top:143.1px;width:16.4px;height:16.4px;background:#a5c8ef;border-radius:50%"></div><span class="t" style="left:375.00px;top:144px;line-height:15px;font-size:13.19px;color:#17386f;transform:scaleX(0.9000);"><i class="o">1</i></span><div class="b" style="left:9px;top:147.3px;width:26px;height:26px;border-radius:50%;border:1px solid #fafafb;box-sizing:border-box"></div><svg class="ic" style="left:18.4px;top:156.7px" width="7.200" height="7.200" viewBox="0 0 7.200 7.200"><path d="M3.600 0v7.200M0 3.600h7.200" stroke="#222" stroke-width="1.700"/></svg></article><article class="b card" style="left:7px;top:310px;width:399px;height:187px;border:2px solid #41a6de;border-radius:5px"><div class="b" style="left:9px;top:17.8px;width:33px;height:26.3px;background:#aed3f6;border:1px solid #98bce2;border-radius:2px;box-sizing:border-box"></div><span class="t" style="left:16.95px;top:23px;line-height:16px;font-size:14.0px;color:#1c1c1e;letter-spacing:0.354px;transform:scaleX(1.0731);-webkit-text-stroke:0.35px #1c1c1e;--sw:0.35px;">46</span><h3 class="t" style="left:51.90px;top:20px;line-height:17px;font-size:15.4px;color:#1d1d1f;letter-spacing:0.271px;transform:scaleX(1.0507);-webkit-text-stroke:0.15px #1d1d1f;--sw:0.15px;">Sarah Thompson</h3><span class="t" style="left:51.90px;top:41px;line-height:15px;font-size:13.4px;color:#85888b;letter-spacing:0.21px;transform:scaleX(1.0541);-webkit-text-stroke:0.12px #85888b;--sw:0.12px;"><i class="o">1</i>230 North Pacific Breeze Avenue, San Dieg...</span><svg class="ic" style="left:363.3px;top:17.3px" width="22.5" height="22.5" viewBox="0 0 22.500 22.500" ><circle cx="11.250" cy="11.250" r="11.200" fill="#4c8fdc"/><circle cx="11.250" cy="11.250" r="7" fill="none" stroke="#e9f5ff" stroke-width="1.250"/><path d="M9.700 8.700l4.100 2.550l-4.100 2.550z" fill="#2f5f9c" stroke="#e9f5ff" stroke-width="1.200" stroke-linejoin="round"/></svg><div class="b" style="left:9px;top:67.4px;width:172px;height:26.3px;background:#fdfdfd;border:1px solid #e4e4e4;border-radius:14px;box-sizing:border-box;box-shadow:0 0 2px rgba(0,0,0,.08)"></div><svg class="ic" style="left:13.1px;top:71.5px" width="18" height="18" viewBox="0 0 18 18" ><circle cx="9" cy="9" r="8.800" fill="#9a9a9a"/><g fill="none" stroke="#f1f1f1" stroke-width="1.050" stroke-linejoin="round"><path d="M3.400 6.200h7.200v5.800h-7.200z"/><path d="M10.600 7.700h2.300l1.700 2.100v2.200h-4"/></g><circle cx="5.700" cy="12.300" r="1.250" fill="#f1f1f1"/><circle cx="12.300" cy="12.300" r="1.250" fill="#f1f1f1"/><circle cx="7" cy="9.100" r="1.500" fill="none" stroke="#f1f1f1" stroke-width="0.900" stroke-dasharray="1.700 1"/></svg><span class="t" style="left:38.20px;top:72px;line-height:16px;font-size:13.9px;color:#1f1f21;letter-spacing:0.187px;transform:scaleX(1.0483);-webkit-text-stroke:0.3px #1f1f21;--sw:0.3px;">Recurring collection</span><div class="b" style="left:314.2px;top:65.1px;width:71.8px;height:28.6px;background:#fdfdfd;border:1px solid #bbbebe;border-radius:15px;box-sizing:border-box"></div><svg class="ic" style="left:318.8px;top:68.2px" width="22" height="22" viewBox="0 0 22 22" ><circle cx="11" cy="11" r="10.900" fill="#b4b4b4"/><g fill="none" stroke="#fafafa" stroke-width="1.100"><rect x="3" y="5.300" width="16" height="2.900"/><path d="M7 5.300v2.900M11 5.300v2.900M15 5.300v2.900"/></g><path d="M2.700 9.600h16.600l-1.400 7.300h-13.800z" fill="none" stroke="#fafafa" stroke-width="1.300" stroke-linejoin="round"/><rect x="5.400" y="11.400" width="11.200" height="3.900" fill="#a6a6a6"/></svg><span class="t" style="left:347.60px;top:71px;line-height:16px;font-size:14.7px;color:#1d1d1f;transform:scaleX(1.0167);">2</span><svg class="ic" style="left:367.9px;top:76.8px" width="8.8" height="5.2" viewBox="0 0 13.300 7.600" ><path d="M1.200 1.200l5.450 5.200l5.450-5.200" fill="none" stroke="#555" stroke-width="2.5" stroke-linecap="round" stroke-linejoin="round"/></svg><svg class="ic" style="left:321.3px;top:116.1px" width="26" height="25.6" viewBox="0 0 26 25.600" ><path d="M13 1.300c3.200 2.400 6.600 3.200 11.300 3.500v6.200c0 6.200-4.300 11.300-11.300 13.500c-7-2.200-11.300-7.300-11.300-13.500v-6.200c4.700-.3 8.100-1.100 11.300-3.500z" fill="none" stroke="#606060" stroke-width="2.100" stroke-linejoin="round"/><path d="M13 8.800v4.200" stroke="#606060" stroke-width="2.100" stroke-linecap="round"/><circle cx="13" cy="16.600" r="1.250" fill="#606060"/></svg><svg class="ic" style="left:358.6px;top:118.1px" width="23.4" height="22.2" viewBox="0 0 23.400 22.200" ><rect x="1.100" y="1.100" width="21.200" height="20" rx="2.600" fill="none" stroke="#606060" stroke-width="2.100"/><path d="M1.600 16.400l5.800-5.600c.8-.8 1.900-.8 2.700 0l5.300 5.200c1 1 2.400 1.100 3.400 .2l3.300-2.800" fill="none" stroke="#606060" stroke-width="2.100" stroke-linejoin="round"/><circle cx="15.400" cy="6.400" r="1.300" fill="#606060"/></svg><svg class="ic" style="left:326px;top:149.9px" width="21.2" height="21.0" viewBox="0 0 21.200 21" ><path d="M20.200 14.800v-12.400c0-.8-.6-1.400-1.400-1.400h-16.400c-.8 0-1.400 .6-1.400 1.400v16.200c0 .8 .6 1.400 1.400 1.400h12.400" fill="none" stroke="#5a5a5a" stroke-width="1.900"/><path d="M14.400 20.400l6-6h-4.600c-.8 0-1.400 .6-1.400 1.400z" fill="#5a5a5a"/><rect x="5.400" y="6.100" width="9.600" height="10.300" rx="1.400" fill="none" stroke="#5a5a5a" stroke-width="1.500"/><rect x="7.900" y="4.500" width="4.600" height="2.700" rx="1" fill="#fdfdfd" stroke="#5a5a5a" stroke-width="1.300"/><path d="M7.700 10.300h1.100M10 10.300h3M7.700 13.200h1.100M10 13.200h3" stroke="#5a5a5a" stroke-width="1.300"/></svg><svg class="ic" style="left:357.2px;top:152.9px" width="22" height="15.6" viewBox="0 0 22 15.600" ><path d="M13.200 12.300h-11c-.7 0-1.200-.5-1.200-1.200v-8.900c0-.7 .5-1.200 1.200-1.200h15.600c.7 0 1.200 .5 1.200 1.200v2.400" fill="none" stroke="#6a6a6a" stroke-width="1.700"/><text x="5.700" y="9.800" font-family="Liberation Sans, sans-serif" font-weight="bold" font-size="8.500" text-anchor="middle" fill="#6a6a6a">$</text><path d="M9.400 5.300h5.400M9.400 8.300h3.400" stroke="#6a6a6a" stroke-width="1.400"/><path d="M12.600 15.400l.5-2.900l6.400-6.400l2.400 2.400l-6.400 6.400z" fill="#6a6a6a"/></svg><div class="b" style="left:337.7px;top:111.0px;width:16.4px;height:16.4px;background:#a5c8ef;border-radius:50%"></div><span class="t" style="left:343.40px;top:112px;line-height:15px;font-size:13.19px;color:#17386f;transform:scaleX(0.9000);"><i class="o">1</i></span><div class="b" style="left:373.8px;top:111.0px;width:16.4px;height:16.4px;background:#a5c8ef;border-radius:50%"></div><span class="t" style="left:378.40px;top:112px;line-height:15px;font-size:13.19px;color:#17386f;transform:scaleX(0.9883);">3</span><div class="b" style="left:369.3px;top:143.3px;width:16.4px;height:16.4px;background:#a5c8ef;border-radius:50%"></div><span class="t" style="left:375.00px;top:144px;line-height:15px;font-size:13.19px;color:#17386f;transform:scaleX(0.9000);"><i class="o">1</i></span><div class="b" style="left:9px;top:147.1px;width:104.4px;height:26.4px;background:#65b1f1;border-radius:14px"></div><span class="t" style="left:20.30px;top:152px;line-height:16px;font-size:13.9px;color:#13305c;letter-spacing:0.18px;transform:scaleX(1.0408);-webkit-text-stroke:0.4px #13305c;--sw:0.4px;">New service</span><div class="b" style="left:119.0px;top:147.5px;width:26px;height:26px;border-radius:50%;border:1px solid #fafafb;box-sizing:border-box"></div><svg class="ic" style="left:128.4px;top:156.9px" width="7.200" height="7.200" viewBox="0 0 7.200 7.200"><path d="M3.600 0v7.200M0 3.600h7.200" stroke="#222" stroke-width="1.700"/></svg></article><article class="b card" style="left:8px;top:503px;width:397px;height:184px;border:1px solid #e2e4e7;border-radius:4px"><div class="b" style="left:9px;top:18.2px;width:33px;height:26.3px;background:#d6dade;border:1px solid #bcbfc3;border-radius:2px;box-sizing:border-box"></div><span class="t" style="left:17.27px;top:24px;line-height:16px;font-size:14.0px;color:#1c1c1e;letter-spacing:0.21px;transform:scaleX(1.0421);-webkit-text-stroke:0.35px #1c1c1e;--sw:0.35px;">47</span><h3 class="t" style="left:51.90px;top:21px;line-height:17px;font-size:15.4px;color:#1d1d1f;letter-spacing:0.261px;transform:scaleX(1.0550);-webkit-text-stroke:0.15px #1d1d1f;--sw:0.15px;">Michael Rodriguez</h3><span class="t" style="left:51.90px;top:42px;line-height:15px;font-size:13.4px;color:#85888b;letter-spacing:0.208px;transform:scaleX(1.0535);-webkit-text-stroke:0.12px #85888b;--sw:0.12px;"><i class="o">1</i>295 North Pacific Breeze Avenue, San Dieg...</span><svg class="ic" style="left:363.3px;top:17.7px" width="22.5" height="22.5" viewBox="0 0 22.500 22.500" ><circle cx="11.250" cy="11.250" r="11.200" fill="#999999"/><rect x="4.100" y="5.900" width="14.300" height="12.700" rx="1.300" fill="#949494" stroke="#f3f3f3" stroke-width="1.200"/><path d="M7.300 10.600h8" stroke="#e6e6e6" stroke-width="1.300"/><path d="M7.700 4.300v1.900M14.800 4.300v1.900" stroke="#f0f0f0" stroke-width="1.300"/></svg><div class="b" style="left:9px;top:67.8px;width:172px;height:26.3px;background:#fdfdfd;border:1px solid #e4e4e4;border-radius:14px;box-sizing:border-box;box-shadow:0 0 2px rgba(0,0,0,.08)"></div><svg class="ic" style="left:13.1px;top:71.9px" width="18" height="18" viewBox="0 0 18 18" ><circle cx="9" cy="9" r="8.800" fill="#9a9a9a"/><g fill="none" stroke="#f1f1f1" stroke-width="1.050" stroke-linejoin="round"><path d="M3.400 6.200h7.200v5.800h-7.200z"/><path d="M10.600 7.700h2.300l1.700 2.100v2.200h-4"/></g><circle cx="5.700" cy="12.300" r="1.250" fill="#f1f1f1"/><circle cx="12.300" cy="12.300" r="1.250" fill="#f1f1f1"/><circle cx="7" cy="9.100" r="1.500" fill="none" stroke="#f1f1f1" stroke-width="0.900" stroke-dasharray="1.700 1"/></svg><span class="t" style="left:38.20px;top:73px;line-height:16px;font-size:13.9px;color:#1f1f21;letter-spacing:0.187px;transform:scaleX(1.0483);-webkit-text-stroke:0.3px #1f1f21;--sw:0.3px;">Recurring collection</span><div class="b" style="left:314.2px;top:65.5px;width:71.8px;height:28.6px;background:#fdfdfd;border:1px solid #bbbebe;border-radius:15px;box-sizing:border-box"></div><svg class="ic" style="left:318.8px;top:68.6px" width="22" height="22" viewBox="0 0 22 22" ><circle cx="11" cy="11" r="10.900" fill="#b4b4b4"/><g fill="none" stroke="#fafafa" stroke-width="1.100"><rect x="3" y="5.300" width="16" height="2.900"/><path d="M7 5.300v2.900M11 5.300v2.900M15 5.300v2.900"/></g><path d="M2.700 9.600h16.600l-1.400 7.300h-13.800z" fill="none" stroke="#fafafa" stroke-width="1.300" stroke-linejoin="round"/><rect x="5.400" y="11.400" width="11.200" height="3.900" fill="#a6a6a6"/></svg><span class="t" style="left:347.60px;top:71px;line-height:16px;font-size:14.7px;color:#1d1d1f;transform:scaleX(1.0167);">2</span><svg class="ic" style="left:367.9px;top:77.2px" width="8.8" height="5.2" viewBox="0 0 13.300 7.600" ><path d="M1.200 1.200l5.450 5.200l5.450-5.200" fill="none" stroke="#555" stroke-width="2.5" stroke-linecap="round" stroke-linejoin="round"/></svg><svg class="ic" style="left:321.3px;top:116.5px" width="26" height="25.6" viewBox="0 0 26 25.600" ><path d="M13 1.300c3.200 2.400 6.600 3.200 11.300 3.500v6.200c0 6.200-4.300 11.300-11.300 13.500c-7-2.200-11.300-7.300-11.300-13.500v-6.200c4.700-.3 8.100-1.100 11.300-3.500z" fill="none" stroke="#606060" stroke-width="2.100" stroke-linejoin="round"/><path d="M13 8.800v4.200" stroke="#606060" stroke-width="2.100" stroke-linecap="round"/><circle cx="13" cy="16.600" r="1.250" fill="#606060"/></svg><svg class="ic" style="left:358.6px;top:118.5px" width="23.4" height="22.2" viewBox="0 0 23.400 22.200" ><rect x="1.100" y="1.100" width="21.200" height="20" rx="2.600" fill="none" stroke="#606060" stroke-width="2.100"/><path d="M1.600 16.400l5.800-5.600c.8-.8 1.900-.8 2.700 0l5.300 5.200c1 1 2.400 1.100 3.400 .2l3.300-2.800" fill="none" stroke="#606060" stroke-width="2.100" stroke-linejoin="round"/><circle cx="15.400" cy="6.400" r="1.300" fill="#606060"/></svg><svg class="ic" style="left:326px;top:150.3px" width="21.2" height="21.0" viewBox="0 0 21.200 21" ><path d="M20.200 14.800v-12.400c0-.8-.6-1.400-1.400-1.400h-16.400c-.8 0-1.400 .6-1.400 1.400v16.200c0 .8 .6 1.400 1.400 1.400h12.400" fill="none" stroke="#5a5a5a" stroke-width="1.900"/><path d="M14.400 20.400l6-6h-4.600c-.8 0-1.400 .6-1.400 1.400z" fill="#5a5a5a"/><rect x="5.400" y="6.100" width="9.600" height="10.300" rx="1.400" fill="none" stroke="#5a5a5a" stroke-width="1.500"/><rect x="7.900" y="4.500" width="4.600" height="2.700" rx="1" fill="#fdfdfd" stroke="#5a5a5a" stroke-width="1.300"/><path d="M7.700 10.300h1.100M10 10.300h3M7.700 13.200h1.100M10 13.200h3" stroke="#5a5a5a" stroke-width="1.300"/></svg><svg class="ic" style="left:357.2px;top:153.3px" width="22" height="15.6" viewBox="0 0 22 15.600" ><path d="M13.200 12.300h-11c-.7 0-1.200-.5-1.200-1.200v-8.900c0-.7 .5-1.200 1.200-1.200h15.600c.7 0 1.200 .5 1.200 1.200v2.400" fill="none" stroke="#6a6a6a" stroke-width="1.700"/><text x="5.700" y="9.800" font-family="Liberation Sans, sans-serif" font-weight="bold" font-size="8.500" text-anchor="middle" fill="#6a6a6a">$</text><path d="M9.400 5.300h5.400M9.400 8.300h3.400" stroke="#6a6a6a" stroke-width="1.400"/><path d="M12.600 15.400l.5-2.900l6.400-6.400l2.400 2.400l-6.400 6.400z" fill="#6a6a6a"/></svg><div class="b" style="left:337.7px;top:111.4px;width:16.4px;height:16.4px;background:#a5c8ef;border-radius:50%"></div><span class="t" style="left:342.30px;top:112px;line-height:15px;font-size:13.19px;color:#17386f;transform:scaleX(0.9883);">2</span><div class="b" style="left:373.8px;top:111.4px;width:16.4px;height:16.4px;background:#a5c8ef;border-radius:50%"></div><span class="t" style="left:378.40px;top:112px;line-height:15px;font-size:13.19px;color:#17386f;transform:scaleX(0.9883);">2</span><div class="b" style="left:369.3px;top:143.7px;width:16.4px;height:16.4px;background:#a5c8ef;border-radius:50%"></div><span class="t" style="left:375.00px;top:145px;line-height:15px;font-size:13.19px;color:#17386f;transform:scaleX(0.9000);"><i class="o">1</i></span><div class="b" style="left:9px;top:147.9px;width:26px;height:26px;border-radius:50%;border:1px solid #fafafb;box-sizing:border-box"></div><svg class="ic" style="left:18.4px;top:157.3px" width="7.200" height="7.200" viewBox="0 0 7.200 7.200"><path d="M3.600 0v7.200M0 3.600h7.200" stroke="#222" stroke-width="1.700"/></svg></article></section><section class="b col" style="left:429px;top:0;width:413px;height:627px"><div class="b" style="left:0px;top:32px;width:413px;height:63.3px;background:#fdfdfe;border-radius:4px 4px 0 0;box-shadow:0 1px 2px rgba(0,0,0,.15),0 1px 9px rgba(0,0,0,.1)"></div><div class="b" style="left:0px;top:31.80000000000001px;width:413px;height:4.4px;background:#e8a548;border-radius:4px 4px 0 0"></div><svg class="ic" style="left:8.80px;top:38.60px;filter:blur(.35px)" width="53.400000000000006" height="53.400000000000006" viewBox="0 0 53.400000000000006 53.400000000000006"><circle cx="26.700000000000003" cy="26.700000000000003" r="22.1" fill="none" stroke="#d3d5d6" stroke-width="4.6"/><path d="M48.75 25.16A22.1 22.1 0 0 1 45.44 38.41" fill="none" stroke="#e0e9b4" stroke-width="4.6"/><path d="M44.58 39.69A22.1 22.1 0 1 1 25.16 4.65" fill="none" stroke="#cfe6cc" stroke-width="4.6"/></svg><div class="b" style="left:18.8px;top:48.40000000000001px;width:33.4px;height:33.4px;background:#ae85c4;border-radius:50%"></div><div class="b" style="left:43.0px;top:48.30000000000001px;width:10.4px;height:10.4px;background:#c9c9c9;border-radius:50%;border:1.500px solid #f8faf8;box-sizing:border-box"></div><span class="t" style="left:30.60px;top:59px;line-height:15px;font-size:13.6px;color:#16182a;font-weight:bold;">D</span><h2 class="t" style="left:72.00px;top:44px;line-height:21px;font-size:18.27px;color:#1b1b1d;letter-spacing:0.093px;transform:scaleX(1.0155);">Del Mar</h2><span class="t" style="left:72.20px;top:66px;line-height:17px;font-size:15.9px;color:#8a8e93;letter-spacing:0.207px;transform:scaleX(1.0432);">67 stops</span><svg class="ic" style="left:316.2px;top:56.89999999999998px" width="18.4" height="16" viewBox="0 0 18.400 16" ><rect x="0" y="0.6" width="18.400" height="1.700" fill="#6a6a6a"/><rect x="3.200" y="7.0" width="12" height="1.700" fill="#6a6a6a"/><rect x="6.800" y="13.5" width="4.800" height="1.700" fill="#6a6a6a"/></svg><div class="b" style="left:338.3px;top:51.10000000000002px;width:9.6px;height:9.6px;background:#126ee0;border-radius:50%"></div><svg class="ic" style="left:366.7px;top:62.19999999999999px" width="20.6" height="4.4" viewBox="0 0 20.6 4.4" ><circle cx="2.2" cy="2.2" r="2.2" fill="#5a5a5a"/><circle cx="10.3" cy="2.2" r="2.2" fill="#5a5a5a"/><circle cx="18.4" cy="2.2" r="2.2" fill="#5a5a5a"/></svg><div class="b" style="left:276.4px;top:13.599999999999994px;width:120.6px;height:29px;background:#e4f2e5;border:2px solid #7db980;border-radius:5px;box-sizing:border-box"></div><svg class="ic" style="left:289.59999999999997px;top:19.599999999999994px" width="15" height="17.2" viewBox="0 0 15 17.200" ><path d="M0.200 3h14.600M4.600 1.200h5.800" stroke="#4c9f50" stroke-width="1.800" fill="none"/><path d="M1.500 4.800h12l-.8 11.300c0 .6-.5 1-1.100 1h-8.200c-.6 0-1.100-.4-1.100-1z" fill="#4c9f50"/><path d="M4.400 10.600l2.300 2.300l4.100-4.300" stroke="#f0f8e8" stroke-width="1.700" fill="none" stroke-linecap="round" stroke-linejoin="round"/></svg><span class="t" style="left:316.50px;top:20px;line-height:17px;font-size:15.22px;color:#7c7c7c;letter-spacing:0.149px;transform:scaleX(1.0282);">Complete</span><article class="b card" style="left:7px;top:117px;width:399px;height:187px;border:2px solid #7aba7e;border-radius:5px"><div class="b" style="left:9px;top:18.6px;width:33px;height:26.3px;background:#c4e3c6;border:1px solid #abc6ad;border-radius:2px;box-sizing:border-box"></div><span class="t" style="left:22.68px;top:24px;line-height:16px;font-size:14.0px;color:#1c1c1e;transform:scaleX(0.9000);-webkit-text-stroke:0.35px #1c1c1e;--sw:0.35px;"><i class="o">1</i></span><h3 class="t" style="left:51.90px;top:21px;line-height:17px;font-size:15.4px;color:#1d1d1f;letter-spacing:0.292px;transform:scaleX(1.0598);-webkit-text-stroke:0.15px #1d1d1f;--sw:0.15px;">David Anderson</h3><span class="t" style="left:51.90px;top:42px;line-height:15px;font-size:13.4px;color:#85888b;letter-spacing:0.216px;transform:scaleX(1.0561);-webkit-text-stroke:0.12px #85888b;--sw:0.12px;">3344 South Del Mar Heights Street, San Die...</span><svg class="ic" style="left:363.3px;top:18.1px" width="22.5" height="22.5" viewBox="0 0 22.500 22.500" ><circle cx="11.500" cy="11.500" r="11.200" fill="#59a85b"/><path d="M5.700 11.700l3.700 3.700l7.600-7.600" fill="none" stroke="#f6fbf0" stroke-width="1.700" stroke-linecap="round" stroke-linejoin="round"/></svg><div class="b" style="left:9px;top:68.2px;width:172px;height:26.3px;background:#fdfdfd;border:1px solid #e4e4e4;border-radius:14px;box-sizing:border-box;box-shadow:0 0 2px rgba(0,0,0,.08)"></div><svg class="ic" style="left:13.1px;top:72.3px" width="18" height="18" viewBox="0 0 18 18" ><circle cx="9" cy="9" r="8.800" fill="#9a9a9a"/><g fill="none" stroke="#f1f1f1" stroke-width="1.050" stroke-linejoin="round"><path d="M3.400 6.200h7.200v5.800h-7.200z"/><path d="M10.600 7.700h2.300l1.700 2.100v2.200h-4"/></g><circle cx="5.700" cy="12.300" r="1.250" fill="#f1f1f1"/><circle cx="12.300" cy="12.300" r="1.250" fill="#f1f1f1"/><circle cx="7" cy="9.100" r="1.500" fill="none" stroke="#f1f1f1" stroke-width="0.900" stroke-dasharray="1.700 1"/></svg><span class="t" style="left:38.20px;top:73px;line-height:16px;font-size:13.9px;color:#1f1f21;letter-spacing:0.187px;transform:scaleX(1.0483);-webkit-text-stroke:0.3px #1f1f21;--sw:0.3px;">Recurring collection</span><div class="b" style="left:314.2px;top:65.9px;width:71.8px;height:28.6px;background:#fdfdfd;border:1px solid #bbbebe;border-radius:15px;box-sizing:border-box"></div><svg class="ic" style="left:318.8px;top:69.0px" width="22" height="22" viewBox="0 0 22 22" ><circle cx="11" cy="11" r="10.900" fill="#b4b4b4"/><g fill="none" stroke="#fafafa" stroke-width="1.100"><rect x="3" y="5.300" width="16" height="2.900"/><path d="M7 5.300v2.900M11 5.300v2.900M15 5.300v2.900"/></g><path d="M2.700 9.600h16.600l-1.400 7.300h-13.800z" fill="none" stroke="#fafafa" stroke-width="1.300" stroke-linejoin="round"/><rect x="5.400" y="11.400" width="11.200" height="3.900" fill="#a6a6a6"/></svg><span class="t" style="left:347.60px;top:72px;line-height:16px;font-size:14.7px;color:#1d1d1f;transform:scaleX(1.0167);">2</span><svg class="ic" style="left:367.9px;top:77.6px" width="8.8" height="5.2" viewBox="0 0 13.300 7.600" ><path d="M1.200 1.200l5.450 5.200l5.450-5.200" fill="none" stroke="#555" stroke-width="2.5" stroke-linecap="round" stroke-linejoin="round"/></svg><svg class="ic" style="left:321.3px;top:116.9px" width="26" height="25.6" viewBox="0 0 26 25.600" ><path d="M13 1.300c3.200 2.400 6.600 3.200 11.300 3.500v6.200c0 6.200-4.300 11.300-11.300 13.500c-7-2.200-11.300-7.300-11.300-13.500v-6.200c4.700-.3 8.100-1.100 11.300-3.500z" fill="none" stroke="#606060" stroke-width="2.100" stroke-linejoin="round"/><path d="M13 8.800v4.200" stroke="#606060" stroke-width="2.100" stroke-linecap="round"/><circle cx="13" cy="16.600" r="1.250" fill="#606060"/></svg><svg class="ic" style="left:358.6px;top:118.9px" width="23.4" height="22.2" viewBox="0 0 23.400 22.200" ><rect x="1.100" y="1.100" width="21.200" height="20" rx="2.600" fill="none" stroke="#606060" stroke-width="2.100"/><path d="M1.600 16.400l5.800-5.600c.8-.8 1.900-.8 2.700 0l5.300 5.200c1 1 2.400 1.100 3.400 .2l3.300-2.800" fill="none" stroke="#606060" stroke-width="2.100" stroke-linejoin="round"/><circle cx="15.400" cy="6.400" r="1.300" fill="#606060"/></svg><svg class="ic" style="left:326px;top:150.7px" width="21.2" height="21.0" viewBox="0 0 21.200 21" ><path d="M20.200 14.800v-12.400c0-.8-.6-1.400-1.400-1.400h-16.400c-.8 0-1.400 .6-1.400 1.400v16.200c0 .8 .6 1.400 1.400 1.400h12.400" fill="none" stroke="#5a5a5a" stroke-width="1.900"/><path d="M14.400 20.400l6-6h-4.600c-.8 0-1.400 .6-1.400 1.400z" fill="#5a5a5a"/><rect x="5.400" y="6.100" width="9.600" height="10.300" rx="1.400" fill="none" stroke="#5a5a5a" stroke-width="1.500"/><rect x="7.900" y="4.500" width="4.600" height="2.700" rx="1" fill="#fdfdfd" stroke="#5a5a5a" stroke-width="1.300"/><path d="M7.700 10.300h1.100M10 10.300h3M7.700 13.200h1.100M10 13.200h3" stroke="#5a5a5a" stroke-width="1.300"/></svg><svg class="ic" style="left:357.2px;top:153.7px" width="22" height="15.6" viewBox="0 0 22 15.600" ><path d="M13.200 12.300h-11c-.7 0-1.200-.5-1.200-1.200v-8.900c0-.7 .5-1.200 1.200-1.200h15.600c.7 0 1.200 .5 1.200 1.200v2.400" fill="none" stroke="#6a6a6a" stroke-width="1.700"/><text x="5.700" y="9.800" font-family="Liberation Sans, sans-serif" font-weight="bold" font-size="8.500" text-anchor="middle" fill="#6a6a6a">$</text><path d="M9.400 5.300h5.400M9.400 8.300h3.400" stroke="#6a6a6a" stroke-width="1.400"/><path d="M12.600 15.400l.5-2.900l6.400-6.400l2.400 2.400l-6.400 6.400z" fill="#6a6a6a"/></svg><div class="b" style="left:337.7px;top:111.8px;width:16.4px;height:16.4px;background:#a5c8ef;border-radius:50%"></div><span class="t" style="left:343.40px;top:113px;line-height:15px;font-size:13.19px;color:#17386f;transform:scaleX(0.9000);"><i class="o">1</i></span><div class="b" style="left:373.8px;top:111.8px;width:16.4px;height:16.4px;background:#a5c8ef;border-radius:50%"></div><span class="t" style="left:379.50px;top:113px;line-height:15px;font-size:13.19px;color:#17386f;transform:scaleX(0.9000);"><i class="o">1</i></span><div class="b" style="left:369.3px;top:144.1px;width:16.4px;height:16.4px;background:#a5c8ef;border-radius:50%"></div><span class="t" style="left:375.00px;top:145px;line-height:15px;font-size:13.19px;color:#17386f;transform:scaleX(0.9000);"><i class="o">1</i></span><div class="b" style="left:9px;top:147.9px;width:104.4px;height:26.4px;background:#65b1f1;border-radius:14px"></div><span class="t" style="left:20.30px;top:153px;line-height:16px;font-size:13.9px;color:#13305c;letter-spacing:0.18px;transform:scaleX(1.0408);-webkit-text-stroke:0.4px #13305c;--sw:0.4px;">New service</span><div class="b" style="left:119.0px;top:148.3px;width:26px;height:26px;border-radius:50%;border:1px solid #fafafb;box-sizing:border-box"></div><svg class="ic" style="left:128.4px;top:157.7px" width="7.200" height="7.200" viewBox="0 0 7.200 7.200"><path d="M3.600 0v7.200M0 3.600h7.200" stroke="#222" stroke-width="1.700"/></svg></article><article class="b card" style="left:7px;top:309px;width:399px;height:187px;border:2px solid #7aba7e;border-radius:5px"><div class="b" style="left:9px;top:18.8px;width:33px;height:26.3px;background:#c4e3c6;border:1px solid #abc6ad;border-radius:2px;box-sizing:border-box"></div><span class="t" style="left:21.31px;top:24px;line-height:16px;font-size:14.0px;color:#1c1c1e;transform:scaleX(1.0450);-webkit-text-stroke:0.35px #1c1c1e;--sw:0.35px;">2</span><h3 class="t" style="left:51.90px;top:21px;line-height:17px;font-size:15.4px;color:#1d1d1f;letter-spacing:0.239px;transform:scaleX(1.0508);-webkit-text-stroke:0.15px #1d1d1f;--sw:0.15px;">Rachel Martinez</h3><span class="t" style="left:51.90px;top:42px;line-height:15px;font-size:13.4px;color:#85888b;letter-spacing:0.214px;transform:scaleX(1.0557);-webkit-text-stroke:0.12px #85888b;--sw:0.12px;">3340 South Del Mar Heights Street, San Die...</span><svg class="ic" style="left:363.3px;top:18.3px" width="22.5" height="22.5" viewBox="0 0 22.500 22.500" ><circle cx="11.500" cy="11.500" r="11.200" fill="#59a85b"/><path d="M5.700 11.700l3.700 3.700l7.600-7.600" fill="none" stroke="#f6fbf0" stroke-width="1.700" stroke-linecap="round" stroke-linejoin="round"/></svg><div class="b" style="left:9px;top:68.4px;width:172px;height:26.3px;background:#fdfdfd;border:1px solid #e4e4e4;border-radius:14px;box-sizing:border-box;box-shadow:0 0 2px rgba(0,0,0,.08)"></div><svg class="ic" style="left:13.1px;top:72.5px" width="18" height="18" viewBox="0 0 18 18" ><circle cx="9" cy="9" r="8.800" fill="#9a9a9a"/><g fill="none" stroke="#f1f1f1" stroke-width="1.050" stroke-linejoin="round"><path d="M3.400 6.200h7.200v5.800h-7.200z"/><path d="M10.600 7.700h2.300l1.700 2.100v2.200h-4"/></g><circle cx="5.700" cy="12.300" r="1.250" fill="#f1f1f1"/><circle cx="12.300" cy="12.300" r="1.250" fill="#f1f1f1"/><circle cx="7" cy="9.100" r="1.500" fill="none" stroke="#f1f1f1" stroke-width="0.900" stroke-dasharray="1.700 1"/></svg><span class="t" style="left:38.20px;top:73px;line-height:16px;font-size:13.9px;color:#1f1f21;letter-spacing:0.187px;transform:scaleX(1.0483);-webkit-text-stroke:0.3px #1f1f21;--sw:0.3px;">Recurring collection</span><div class="b" style="left:314.2px;top:66.1px;width:71.8px;height:28.6px;background:#fdfdfd;border:1px solid #bbbebe;border-radius:15px;box-sizing:border-box"></div><svg class="ic" style="left:318.8px;top:69.2px" width="22" height="22" viewBox="0 0 22 22" ><circle cx="11" cy="11" r="11" fill="#b4b4b4"/><circle cx="11" cy="11" r="1.600" fill="#bdbdbd"/></svg><span class="t" style="left:347.60px;top:72px;line-height:16px;font-size:14.7px;color:#1d1d1f;transform:scaleX(1.0167);">2</span><svg class="ic" style="left:367.9px;top:77.8px" width="8.8" height="5.2" viewBox="0 0 13.300 7.600" ><path d="M1.200 1.200l5.450 5.200l5.450-5.200" fill="none" stroke="#555" stroke-width="2.5" stroke-linecap="round" stroke-linejoin="round"/></svg><svg class="ic" style="left:321.3px;top:117.1px" width="26" height="25.6" viewBox="0 0 26 25.600" ><path d="M13 1.300c3.200 2.400 6.600 3.200 11.300 3.500v6.200c0 6.200-4.300 11.300-11.300 13.500c-7-2.200-11.300-7.300-11.300-13.500v-6.200c4.700-.3 8.100-1.100 11.300-3.500z" fill="none" stroke="#606060" stroke-width="2.100" stroke-linejoin="round"/><path d="M13 8.800v4.200" stroke="#606060" stroke-width="2.100" stroke-linecap="round"/><circle cx="13" cy="16.600" r="1.250" fill="#606060"/></svg><svg class="ic" style="left:358.6px;top:119.1px" width="23.4" height="22.2" viewBox="0 0 23.400 22.200" ><rect x="1.100" y="1.100" width="21.200" height="20" rx="2.600" fill="none" stroke="#606060" stroke-width="2.100"/><path d="M1.600 16.400l5.800-5.600c.8-.8 1.900-.8 2.700 0l5.300 5.200c1 1 2.400 1.100 3.400 .2l3.300-2.800" fill="none" stroke="#606060" stroke-width="2.100" stroke-linejoin="round"/><circle cx="15.400" cy="6.400" r="1.300" fill="#606060"/></svg><svg class="ic" style="left:326px;top:150.9px" width="21.2" height="21.0" viewBox="0 0 21.200 21" ><path d="M20.200 14.800v-12.400c0-.8-.6-1.400-1.400-1.400h-16.400c-.8 0-1.400 .6-1.400 1.400v16.200c0 .8 .6 1.400 1.400 1.400h12.400" fill="none" stroke="#5a5a5a" stroke-width="1.900"/><path d="M14.400 20.400l6-6h-4.600c-.8 0-1.400 .6-1.400 1.400z" fill="#5a5a5a"/><rect x="5.400" y="6.100" width="9.600" height="10.300" rx="1.400" fill="none" stroke="#5a5a5a" stroke-width="1.500"/><rect x="7.900" y="4.500" width="4.600" height="2.700" rx="1" fill="#fdfdfd" stroke="#5a5a5a" stroke-width="1.300"/><path d="M7.700 10.300h1.100M10 10.300h3M7.700 13.200h1.100M10 13.200h3" stroke="#5a5a5a" stroke-width="1.300"/></svg><svg class="ic" style="left:357.2px;top:153.9px" width="22" height="15.6" viewBox="0 0 22 15.600" ><path d="M13.200 12.300h-11c-.7 0-1.200-.5-1.200-1.200v-8.900c0-.7 .5-1.200 1.200-1.200h15.600c.7 0 1.200 .5 1.200 1.200v2.400" fill="none" stroke="#6a6a6a" stroke-width="1.700"/><text x="5.700" y="9.800" font-family="Liberation Sans, sans-serif" font-weight="bold" font-size="8.500" text-anchor="middle" fill="#6a6a6a">$</text><path d="M9.400 5.300h5.400M9.400 8.300h3.400" stroke="#6a6a6a" stroke-width="1.400"/><path d="M12.600 15.400l.5-2.900l6.400-6.400l2.400 2.400l-6.400 6.400z" fill="#6a6a6a"/></svg><div class="b" style="left:337.7px;top:112.0px;width:16.4px;height:16.4px;background:#a5c8ef;border-radius:50%"></div><span class="t" style="left:343.40px;top:113px;line-height:15px;font-size:13.19px;color:#17386f;transform:scaleX(0.9000);"><i class="o">1</i></span><div class="b" style="left:373.8px;top:112.0px;width:16.4px;height:16.4px;background:#a5c8ef;border-radius:50%"></div><span class="t" style="left:378.40px;top:113px;line-height:15px;font-size:13.19px;color:#17386f;transform:scaleX(0.9883);">3</span><div class="b" style="left:369.3px;top:144.3px;width:16.4px;height:16.4px;background:#a5c8ef;border-radius:50%"></div><span class="t" style="left:375.00px;top:145px;line-height:15px;font-size:13.19px;color:#17386f;transform:scaleX(0.9000);"><i class="o">1</i></span><div class="b" style="left:9px;top:148.1px;width:104.4px;height:26.4px;background:#65b1f1;border-radius:14px"></div><span class="t" style="left:20.30px;top:153px;line-height:16px;font-size:13.9px;color:#13305c;letter-spacing:0.18px;transform:scaleX(1.0408);-webkit-text-stroke:0.4px #13305c;--sw:0.4px;">New service</span><div class="b" style="left:119.0px;top:148.5px;width:26px;height:26px;border-radius:50%;border:1px solid #fafafb;box-sizing:border-box"></div><svg class="ic" style="left:128.4px;top:157.9px" width="7.200" height="7.200" viewBox="0 0 7.200 7.200"><path d="M3.600 0v7.200M0 3.600h7.200" stroke="#222" stroke-width="1.700"/></svg></article><article class="b card" style="left:7px;top:502px;width:399px;height:187px;border:2px solid #7aba7e;border-radius:5px"><div class="b" style="left:9px;top:18.2px;width:33px;height:26.3px;background:#c4e3c6;border:1px solid #abc6ad;border-radius:2px;box-sizing:border-box"></div><span class="t" style="left:21.24px;top:24px;line-height:16px;font-size:14.0px;color:#1c1c1e;transform:scaleX(1.0555);-webkit-text-stroke:0.35px #1c1c1e;--sw:0.35px;">3</span><h3 class="t" style="left:51.90px;top:21px;line-height:17px;font-size:15.4px;color:#1d1d1f;letter-spacing:0.268px;transform:scaleX(1.0582);-webkit-text-stroke:0.15px #1d1d1f;--sw:0.15px;">Christopher Lee</h3><span class="t" style="left:51.90px;top:42px;line-height:15px;font-size:13.4px;color:#85888b;letter-spacing:0.21px;transform:scaleX(1.0545);-webkit-text-stroke:0.12px #85888b;--sw:0.12px;">3336 South Del Mar Heights Street, San Die...</span><svg class="ic" style="left:363.3px;top:17.7px" width="22.5" height="22.5" viewBox="0 0 22.500 22.500" ><circle cx="11.500" cy="11.500" r="11.200" fill="#59a85b"/><path d="M5.700 11.700l3.700 3.700l7.600-7.600" fill="none" stroke="#f6fbf0" stroke-width="1.700" stroke-linecap="round" stroke-linejoin="round"/></svg><div class="b" style="left:9px;top:67.8px;width:172px;height:26.3px;background:#fdfdfd;border:1px solid #e4e4e4;border-radius:14px;box-sizing:border-box;box-shadow:0 0 2px rgba(0,0,0,.08)"></div><svg class="ic" style="left:13.1px;top:71.9px" width="18" height="18" viewBox="0 0 18 18" ><circle cx="9" cy="9" r="8.800" fill="#9a9a9a"/><g fill="none" stroke="#f1f1f1" stroke-width="1.050" stroke-linejoin="round"><path d="M3.400 6.200h7.200v5.800h-7.200z"/><path d="M10.600 7.700h2.300l1.700 2.100v2.200h-4"/></g><circle cx="5.700" cy="12.300" r="1.250" fill="#f1f1f1"/><circle cx="12.300" cy="12.300" r="1.250" fill="#f1f1f1"/><circle cx="7" cy="9.100" r="1.500" fill="none" stroke="#f1f1f1" stroke-width="0.900" stroke-dasharray="1.700 1"/></svg><span class="t" style="left:38.20px;top:73px;line-height:16px;font-size:13.9px;color:#1f1f21;letter-spacing:0.187px;transform:scaleX(1.0483);-webkit-text-stroke:0.3px #1f1f21;--sw:0.3px;">Recurring collection</span><div class="b" style="left:314.2px;top:65.5px;width:71.8px;height:28.6px;background:#fdfdfd;border:1px solid #bbbebe;border-radius:15px;box-sizing:border-box"></div><svg class="ic" style="left:318.8px;top:68.6px" width="22" height="22" viewBox="0 0 22 22" ><circle cx="11" cy="11" r="11" fill="#b4b4b4"/><circle cx="11" cy="11" r="1.600" fill="#bdbdbd"/></svg><span class="t" style="left:347.60px;top:71px;line-height:16px;font-size:14.7px;color:#1d1d1f;transform:scaleX(1.0167);">2</span><svg class="ic" style="left:367.9px;top:77.2px" width="8.8" height="5.2" viewBox="0 0 13.300 7.600" ><path d="M1.200 1.200l5.450 5.200l5.450-5.200" fill="none" stroke="#555" stroke-width="2.5" stroke-linecap="round" stroke-linejoin="round"/></svg><svg class="ic" style="left:321.3px;top:116.5px" width="26" height="25.6" viewBox="0 0 26 25.600" ><path d="M13 1.300c3.200 2.400 6.600 3.200 11.300 3.500v6.200c0 6.200-4.300 11.300-11.300 13.500c-7-2.200-11.300-7.300-11.300-13.500v-6.200c4.700-.3 8.100-1.100 11.300-3.500z" fill="none" stroke="#606060" stroke-width="2.100" stroke-linejoin="round"/><path d="M13 8.800v4.200" stroke="#606060" stroke-width="2.100" stroke-linecap="round"/><circle cx="13" cy="16.600" r="1.250" fill="#606060"/></svg><svg class="ic" style="left:358.6px;top:118.5px" width="23.4" height="22.2" viewBox="0 0 23.400 22.200" ><rect x="1.100" y="1.100" width="21.200" height="20" rx="2.600" fill="none" stroke="#606060" stroke-width="2.100"/><path d="M1.600 16.400l5.800-5.600c.8-.8 1.900-.8 2.700 0l5.300 5.200c1 1 2.400 1.100 3.400 .2l3.300-2.800" fill="none" stroke="#606060" stroke-width="2.100" stroke-linejoin="round"/><circle cx="15.400" cy="6.400" r="1.300" fill="#606060"/></svg><svg class="ic" style="left:326px;top:150.3px" width="21.2" height="21.0" viewBox="0 0 21.200 21" ><path d="M20.200 14.800v-12.400c0-.8-.6-1.400-1.400-1.400h-16.400c-.8 0-1.400 .6-1.400 1.400v16.200c0 .8 .6 1.400 1.400 1.400h12.400" fill="none" stroke="#5a5a5a" stroke-width="1.900"/><path d="M14.400 20.400l6-6h-4.600c-.8 0-1.400 .6-1.400 1.400z" fill="#5a5a5a"/><rect x="5.400" y="6.100" width="9.600" height="10.300" rx="1.400" fill="none" stroke="#5a5a5a" stroke-width="1.500"/><rect x="7.900" y="4.500" width="4.600" height="2.700" rx="1" fill="#fdfdfd" stroke="#5a5a5a" stroke-width="1.300"/><path d="M7.700 10.300h1.100M10 10.300h3M7.700 13.200h1.100M10 13.200h3" stroke="#5a5a5a" stroke-width="1.300"/></svg><svg class="ic" style="left:357.2px;top:153.3px" width="22" height="15.6" viewBox="0 0 22 15.600" ><path d="M13.200 12.300h-11c-.7 0-1.200-.5-1.200-1.200v-8.900c0-.7 .5-1.200 1.200-1.200h15.600c.7 0 1.200 .5 1.200 1.200v2.400" fill="none" stroke="#6a6a6a" stroke-width="1.700"/><text x="5.700" y="9.800" font-family="Liberation Sans, sans-serif" font-weight="bold" font-size="8.500" text-anchor="middle" fill="#6a6a6a">$</text><path d="M9.400 5.300h5.400M9.400 8.300h3.400" stroke="#6a6a6a" stroke-width="1.400"/><path d="M12.600 15.400l.5-2.900l6.400-6.400l2.400 2.400l-6.400 6.400z" fill="#6a6a6a"/></svg><div class="b" style="left:337.7px;top:111.4px;width:16.4px;height:16.4px;background:#a5c8ef;border-radius:50%"></div><span class="t" style="left:343.40px;top:112px;line-height:15px;font-size:13.19px;color:#17386f;transform:scaleX(0.9000);"><i class="o">1</i></span><div class="b" style="left:373.8px;top:111.4px;width:16.4px;height:16.4px;background:#a5c8ef;border-radius:50%"></div><span class="t" style="left:378.40px;top:112px;line-height:15px;font-size:13.19px;color:#17386f;transform:scaleX(0.9883);">3</span><div class="b" style="left:369.3px;top:143.7px;width:16.4px;height:16.4px;background:#a5c8ef;border-radius:50%"></div><span class="t" style="left:375.00px;top:145px;line-height:15px;font-size:13.19px;color:#17386f;transform:scaleX(0.9000);"><i class="o">1</i></span><div class="b" style="left:9px;top:147.9px;width:26px;height:26px;border-radius:50%;border:1px solid #fafafb;box-sizing:border-box"></div><svg class="ic" style="left:18.4px;top:157.3px" width="7.200" height="7.200" viewBox="0 0 7.200 7.200"><path d="M3.600 0v7.200M0 3.600h7.200" stroke="#222" stroke-width="1.700"/></svg></article></section><section class="b col" style="left:860px;top:0;width:413px;height:627px"><div class="b" style="left:0px;top:32px;width:413px;height:63.3px;background:#fdfdfe;border-radius:4px 4px 0 0;box-shadow:0 1px 2px rgba(0,0,0,.15),0 1px 9px rgba(0,0,0,.1)"></div><div class="b" style="left:0px;top:31.80000000000001px;width:413px;height:4.4px;background:#b388d6;border-radius:4px 4px 0 0"></div><div class="b" style="left:11.0px;top:40.80000000000001px;width:49px;height:49px;border-radius:50%;border:1px solid #f3f4f6;box-sizing:border-box"></div><div class="b" style="left:18.8px;top:48.40000000000001px;width:33.4px;height:33.4px;background:#b388d6;border-radius:50%"></div><div class="b" style="left:43.0px;top:48.30000000000001px;width:10.4px;height:10.4px;background:#c4c4c4;border-radius:50%;border:1.500px solid #f8faf8;box-sizing:border-box"></div><span class="t" style="left:26.33px;top:59px;line-height:15px;font-size:13.6px;color:#16182a;letter-spacing:0.051px;transform:scaleX(1.0086);font-weight:bold;">SS</span><h2 class="t" style="left:72.00px;top:44px;line-height:21px;font-size:18.27px;color:#1b1b1d;letter-spacing:0.127px;transform:scaleX(1.0242);">Silver Strand</h2><span class="t" style="left:72.20px;top:66px;line-height:17px;font-size:15.9px;color:#8a8e93;letter-spacing:0.115px;transform:scaleX(1.0238);"><i class="o">1</i><i class="o">1</i>7 stops</span><svg class="ic" style="left:316.2px;top:56.89999999999998px" width="18.4" height="16" viewBox="0 0 18.400 16" ><rect x="0" y="0.6" width="18.400" height="1.700" fill="#6a6a6a"/><rect x="3.200" y="7.0" width="12" height="1.700" fill="#6a6a6a"/><rect x="6.800" y="13.5" width="4.800" height="1.700" fill="#6a6a6a"/></svg><div class="b" style="left:338.3px;top:51.10000000000002px;width:9.6px;height:9.6px;background:#126ee0;border-radius:50%"></div><svg class="ic" style="left:366.7px;top:62.19999999999999px" width="20.6" height="4.4" viewBox="0 0 20.6 4.4" ><circle cx="2.2" cy="2.2" r="2.2" fill="#5a5a5a"/><circle cx="10.3" cy="2.2" r="2.2" fill="#5a5a5a"/><circle cx="18.4" cy="2.2" r="2.2" fill="#5a5a5a"/></svg><div class="b" style="left:263px;top:13.599999999999994px;width:134px;height:29px;background:#fdfdfd;border:2px solid #a9a9a9;border-radius:5px;box-sizing:border-box"></div><svg class="ic" style="left:275.8px;top:20.80000000000001px" width="16.6" height="15.4" viewBox="0 0 16.600 15.400" ><path d="M0.300 2.700h12.400M3.700 1.100h5.600" stroke="#6b6b6b" stroke-width="1.700" fill="none"/><path d="M1.300 4.300h10.400v10.400h-10.400z" fill="#6b6b6b"/><path d="M4 6v6.800M6.600 6v6.800" stroke="#fdfdfd" stroke-width="1.100"/><circle cx="11.800" cy="10.600" r="4.600" fill="#6b6b6b" stroke="#fdfdfd" stroke-width="1.200"/><path d="M11.800 8.400v2.400h2" stroke="#fdfdfd" stroke-width="1.100" fill="none"/></svg><span class="t" style="left:303.80px;top:20px;line-height:17px;font-size:15.22px;color:#7c7c7c;letter-spacing:0.176px;transform:scaleX(1.0391);">Not Started</span><article class="b card" style="left:8px;top:119px;width:397px;height:184px;border:1px solid #e2e4e7;border-radius:4px"><div class="b" style="left:9px;top:17.6px;width:33px;height:26.3px;background:#d6dade;border:1px solid #bcbfc3;border-radius:2px;box-sizing:border-box"></div><span class="t" style="left:22.68px;top:23px;line-height:16px;font-size:14.0px;color:#1c1c1e;transform:scaleX(0.9000);-webkit-text-stroke:0.35px #1c1c1e;--sw:0.35px;"><i class="o">1</i></span><h3 class="t" style="left:51.90px;top:20px;line-height:17px;font-size:15.4px;color:#1d1d1f;letter-spacing:0.26px;transform:scaleX(1.0612);-webkit-text-stroke:0.15px #1d1d1f;--sw:0.15px;">William Taylor</h3><span class="t" style="left:51.90px;top:41px;line-height:15px;font-size:13.4px;color:#85888b;letter-spacing:0.2px;transform:scaleX(1.0521);-webkit-text-stroke:0.12px #85888b;--sw:0.12px;">7654 Silver Strand Boulevard, San Diego, C...</span><svg class="ic" style="left:363.3px;top:17.1px" width="22.5" height="22.5" viewBox="0 0 22.500 22.500" ><circle cx="11.250" cy="11.250" r="11.200" fill="#999999"/><rect x="4.100" y="5.900" width="14.300" height="12.700" rx="1.300" fill="#949494" stroke="#f3f3f3" stroke-width="1.200"/><path d="M7.300 10.600h8" stroke="#e6e6e6" stroke-width="1.300"/><path d="M7.700 4.300v1.900M14.800 4.300v1.900" stroke="#f0f0f0" stroke-width="1.300"/></svg><div class="b" style="left:9px;top:67.2px;width:172px;height:26.3px;background:#fdfdfd;border:1px solid #e4e4e4;border-radius:14px;box-sizing:border-box;box-shadow:0 0 2px rgba(0,0,0,.08)"></div><svg class="ic" style="left:13.1px;top:71.3px" width="18" height="18" viewBox="0 0 18 18" ><circle cx="9" cy="9" r="8.800" fill="#9a9a9a"/><g fill="none" stroke="#f1f1f1" stroke-width="1.050" stroke-linejoin="round"><path d="M3.400 6.200h7.200v5.800h-7.200z"/><path d="M10.600 7.700h2.300l1.700 2.100v2.200h-4"/></g><circle cx="5.700" cy="12.300" r="1.250" fill="#f1f1f1"/><circle cx="12.300" cy="12.300" r="1.250" fill="#f1f1f1"/><circle cx="7" cy="9.100" r="1.500" fill="none" stroke="#f1f1f1" stroke-width="0.900" stroke-dasharray="1.700 1"/></svg><span class="t" style="left:38.20px;top:72px;line-height:16px;font-size:13.9px;color:#1f1f21;letter-spacing:0.187px;transform:scaleX(1.0483);-webkit-text-stroke:0.3px #1f1f21;--sw:0.3px;">Recurring collection</span><div class="b" style="left:314.2px;top:64.9px;width:71.8px;height:28.6px;background:#fdfdfd;border:1px solid #bbbebe;border-radius:15px;box-sizing:border-box"></div><svg class="ic" style="left:318.8px;top:68.0px" width="22" height="22" viewBox="0 0 22 22" ><circle cx="11" cy="11" r="10.900" fill="#b4b4b4"/><g fill="none" stroke="#fafafa" stroke-width="1.100"><rect x="3" y="5.300" width="16" height="2.900"/><path d="M7 5.300v2.900M11 5.300v2.900M15 5.300v2.900"/></g><path d="M2.700 9.600h16.600l-1.400 7.300h-13.800z" fill="none" stroke="#fafafa" stroke-width="1.300" stroke-linejoin="round"/><rect x="5.400" y="11.400" width="11.200" height="3.900" fill="#a6a6a6"/></svg><span class="t" style="left:347.60px;top:71px;line-height:16px;font-size:14.7px;color:#1d1d1f;transform:scaleX(1.0167);">2</span><svg class="ic" style="left:367.9px;top:76.6px" width="8.8" height="5.2" viewBox="0 0 13.300 7.600" ><path d="M1.200 1.200l5.450 5.200l5.450-5.200" fill="none" stroke="#555" stroke-width="2.5" stroke-linecap="round" stroke-linejoin="round"/></svg><svg class="ic" style="left:321.3px;top:115.9px" width="26" height="25.6" viewBox="0 0 26 25.600" ><path d="M13 1.300c3.200 2.400 6.600 3.200 11.300 3.500v6.200c0 6.200-4.300 11.300-11.300 13.500c-7-2.200-11.300-7.300-11.300-13.500v-6.200c4.700-.3 8.100-1.100 11.300-3.500z" fill="none" stroke="#606060" stroke-width="2.100" stroke-linejoin="round"/><path d="M13 8.800v4.200" stroke="#606060" stroke-width="2.100" stroke-linecap="round"/><circle cx="13" cy="16.600" r="1.250" fill="#606060"/></svg><svg class="ic" style="left:358.6px;top:117.9px" width="23.4" height="22.2" viewBox="0 0 23.400 22.200" ><rect x="1.100" y="1.100" width="21.200" height="20" rx="2.600" fill="none" stroke="#606060" stroke-width="2.100"/><path d="M1.600 16.400l5.800-5.600c.8-.8 1.900-.8 2.700 0l5.300 5.200c1 1 2.400 1.100 3.400 .2l3.300-2.800" fill="none" stroke="#606060" stroke-width="2.100" stroke-linejoin="round"/><circle cx="15.400" cy="6.400" r="1.300" fill="#606060"/></svg><svg class="ic" style="left:326px;top:149.7px" width="21.2" height="21.0" viewBox="0 0 21.200 21" ><path d="M20.200 14.800v-12.400c0-.8-.6-1.400-1.400-1.400h-16.400c-.8 0-1.400 .6-1.400 1.400v16.200c0 .8 .6 1.400 1.400 1.400h12.400" fill="none" stroke="#5a5a5a" stroke-width="1.900"/><path d="M14.400 20.400l6-6h-4.600c-.8 0-1.400 .6-1.400 1.400z" fill="#5a5a5a"/><rect x="5.400" y="6.100" width="9.600" height="10.300" rx="1.400" fill="none" stroke="#5a5a5a" stroke-width="1.500"/><rect x="7.900" y="4.500" width="4.600" height="2.700" rx="1" fill="#fdfdfd" stroke="#5a5a5a" stroke-width="1.300"/><path d="M7.700 10.300h1.100M10 10.300h3M7.700 13.200h1.100M10 13.200h3" stroke="#5a5a5a" stroke-width="1.300"/></svg><svg class="ic" style="left:357.2px;top:152.7px" width="22" height="15.6" viewBox="0 0 22 15.600" ><path d="M13.200 12.300h-11c-.7 0-1.200-.5-1.200-1.200v-8.900c0-.7 .5-1.200 1.200-1.200h15.600c.7 0 1.200 .5 1.200 1.200v2.400" fill="none" stroke="#6a6a6a" stroke-width="1.700"/><text x="5.700" y="9.800" font-family="Liberation Sans, sans-serif" font-weight="bold" font-size="8.500" text-anchor="middle" fill="#6a6a6a">$</text><path d="M9.400 5.300h5.400M9.400 8.300h3.400" stroke="#6a6a6a" stroke-width="1.400"/><path d="M12.600 15.400l.5-2.900l6.400-6.400l2.400 2.400l-6.400 6.400z" fill="#6a6a6a"/></svg><div class="b" style="left:337.7px;top:110.8px;width:16.4px;height:16.4px;background:#a5c8ef;border-radius:50%"></div><span class="t" style="left:342.30px;top:112px;line-height:15px;font-size:13.19px;color:#17386f;transform:scaleX(0.9883);">2</span><div class="b" style="left:373.8px;top:110.8px;width:16.4px;height:16.4px;background:#a5c8ef;border-radius:50%"></div><span class="t" style="left:378.40px;top:112px;line-height:15px;font-size:13.19px;color:#17386f;transform:scaleX(0.9883);">2</span><div class="b" style="left:369.3px;top:143.1px;width:16.4px;height:16.4px;background:#a5c8ef;border-radius:50%"></div><span class="t" style="left:375.00px;top:144px;line-height:15px;font-size:13.19px;color:#17386f;transform:scaleX(0.9000);"><i class="o">1</i></span><div class="b" style="left:9px;top:146.9px;width:104.4px;height:26.4px;background:#65b1f1;border-radius:14px"></div><span class="t" style="left:20.30px;top:152px;line-height:16px;font-size:13.9px;color:#13305c;letter-spacing:0.18px;transform:scaleX(1.0408);-webkit-text-stroke:0.4px #13305c;--sw:0.4px;">New service</span><div class="b" style="left:119.0px;top:147.3px;width:26px;height:26px;border-radius:50%;border:1px solid #fafafb;box-sizing:border-box"></div><svg class="ic" style="left:128.4px;top:156.7px" width="7.200" height="7.200" viewBox="0 0 7.200 7.200"><path d="M3.600 0v7.200M0 3.600h7.200" stroke="#222" stroke-width="1.700"/></svg></article><article class="b card" style="left:8px;top:311px;width:397px;height:184px;border:1px solid #e2e4e7;border-radius:4px"><div class="b" style="left:9px;top:17.8px;width:33px;height:26.3px;background:#d6dade;border:1px solid #bcbfc3;border-radius:2px;box-sizing:border-box"></div><span class="t" style="left:21.31px;top:23px;line-height:16px;font-size:14.0px;color:#1c1c1e;transform:scaleX(1.0450);-webkit-text-stroke:0.35px #1c1c1e;--sw:0.35px;">2</span><h3 class="t" style="left:51.90px;top:20px;line-height:17px;font-size:15.4px;color:#1d1d1f;letter-spacing:0.265px;transform:scaleX(1.0495);-webkit-text-stroke:0.15px #1d1d1f;--sw:0.15px;">Amanda White</h3><span class="t" style="left:51.90px;top:41px;line-height:15px;font-size:13.4px;color:#85888b;letter-spacing:0.198px;transform:scaleX(1.0517);-webkit-text-stroke:0.12px #85888b;--sw:0.12px;">7650 Silver Strand Boulevard, San Diego, C...</span><svg class="ic" style="left:363.3px;top:17.3px" width="22.5" height="22.5" viewBox="0 0 22.500 22.500" ><circle cx="11.250" cy="11.250" r="11.200" fill="#999999"/><rect x="4.100" y="5.900" width="14.300" height="12.700" rx="1.300" fill="#949494" stroke="#f3f3f3" stroke-width="1.200"/><path d="M7.300 10.600h8" stroke="#e6e6e6" stroke-width="1.300"/><path d="M7.700 4.300v1.900M14.800 4.300v1.900" stroke="#f0f0f0" stroke-width="1.300"/></svg><div class="b" style="left:9px;top:67.4px;width:172px;height:26.3px;background:#fdfdfd;border:1px solid #e4e4e4;border-radius:14px;box-sizing:border-box;box-shadow:0 0 2px rgba(0,0,0,.08)"></div><svg class="ic" style="left:13.1px;top:71.5px" width="18" height="18" viewBox="0 0 18 18" ><circle cx="9" cy="9" r="8.800" fill="#9a9a9a"/><g fill="none" stroke="#f1f1f1" stroke-width="1.050" stroke-linejoin="round"><path d="M3.400 6.200h7.200v5.800h-7.200z"/><path d="M10.600 7.700h2.300l1.700 2.100v2.200h-4"/></g><circle cx="5.700" cy="12.300" r="1.250" fill="#f1f1f1"/><circle cx="12.300" cy="12.300" r="1.250" fill="#f1f1f1"/><circle cx="7" cy="9.100" r="1.500" fill="none" stroke="#f1f1f1" stroke-width="0.900" stroke-dasharray="1.700 1"/></svg><span class="t" style="left:38.20px;top:72px;line-height:16px;font-size:13.9px;color:#1f1f21;letter-spacing:0.187px;transform:scaleX(1.0483);-webkit-text-stroke:0.3px #1f1f21;--sw:0.3px;">Recurring collection</span><div class="b" style="left:314.2px;top:65.1px;width:71.8px;height:28.6px;background:#fdfdfd;border:1px solid #bbbebe;border-radius:15px;box-sizing:border-box"></div><svg class="ic" style="left:318.8px;top:68.2px" width="22" height="22" viewBox="0 0 22 22" ><circle cx="11" cy="11" r="10.900" fill="#b4b4b4"/><g fill="none" stroke="#fafafa" stroke-width="1.100"><rect x="3" y="5.300" width="16" height="2.900"/><path d="M7 5.300v2.900M11 5.300v2.900M15 5.300v2.900"/></g><path d="M2.700 9.600h16.600l-1.400 7.300h-13.800z" fill="none" stroke="#fafafa" stroke-width="1.300" stroke-linejoin="round"/><rect x="5.400" y="11.400" width="11.200" height="3.900" fill="#a6a6a6"/></svg><span class="t" style="left:347.60px;top:71px;line-height:16px;font-size:14.7px;color:#1d1d1f;transform:scaleX(1.0167);">2</span><svg class="ic" style="left:367.9px;top:76.8px" width="8.8" height="5.2" viewBox="0 0 13.300 7.600" ><path d="M1.200 1.200l5.450 5.200l5.450-5.200" fill="none" stroke="#555" stroke-width="2.5" stroke-linecap="round" stroke-linejoin="round"/></svg><svg class="ic" style="left:321.3px;top:116.1px" width="26" height="25.6" viewBox="0 0 26 25.600" ><path d="M13 1.300c3.200 2.400 6.600 3.200 11.300 3.500v6.200c0 6.200-4.300 11.300-11.300 13.500c-7-2.200-11.300-7.300-11.300-13.500v-6.200c4.700-.3 8.100-1.100 11.300-3.500z" fill="none" stroke="#606060" stroke-width="2.100" stroke-linejoin="round"/><path d="M13 8.800v4.200" stroke="#606060" stroke-width="2.100" stroke-linecap="round"/><circle cx="13" cy="16.600" r="1.250" fill="#606060"/></svg><svg class="ic" style="left:358.6px;top:118.1px" width="23.4" height="22.2" viewBox="0 0 23.400 22.200" ><rect x="1.100" y="1.100" width="21.200" height="20" rx="2.600" fill="none" stroke="#606060" stroke-width="2.100"/><path d="M1.600 16.400l5.800-5.600c.8-.8 1.900-.8 2.700 0l5.300 5.200c1 1 2.400 1.100 3.400 .2l3.300-2.800" fill="none" stroke="#606060" stroke-width="2.100" stroke-linejoin="round"/><circle cx="15.400" cy="6.400" r="1.300" fill="#606060"/></svg><svg class="ic" style="left:326px;top:149.9px" width="21.2" height="21.0" viewBox="0 0 21.200 21" ><path d="M20.200 14.800v-12.400c0-.8-.6-1.400-1.400-1.400h-16.400c-.8 0-1.400 .6-1.400 1.400v16.200c0 .8 .6 1.400 1.400 1.400h12.400" fill="none" stroke="#5a5a5a" stroke-width="1.900"/><path d="M14.400 20.400l6-6h-4.600c-.8 0-1.400 .6-1.400 1.400z" fill="#5a5a5a"/><rect x="5.400" y="6.100" width="9.600" height="10.300" rx="1.400" fill="none" stroke="#5a5a5a" stroke-width="1.500"/><rect x="7.900" y="4.500" width="4.600" height="2.700" rx="1" fill="#fdfdfd" stroke="#5a5a5a" stroke-width="1.300"/><path d="M7.700 10.300h1.100M10 10.300h3M7.700 13.200h1.100M10 13.200h3" stroke="#5a5a5a" stroke-width="1.300"/></svg><svg class="ic" style="left:357.2px;top:152.9px" width="22" height="15.6" viewBox="0 0 22 15.600" ><path d="M13.200 12.300h-11c-.7 0-1.200-.5-1.200-1.200v-8.900c0-.7 .5-1.200 1.200-1.200h15.600c.7 0 1.200 .5 1.200 1.200v2.400" fill="none" stroke="#6a6a6a" stroke-width="1.700"/><text x="5.700" y="9.800" font-family="Liberation Sans, sans-serif" font-weight="bold" font-size="8.500" text-anchor="middle" fill="#6a6a6a">$</text><path d="M9.400 5.300h5.400M9.400 8.300h3.400" stroke="#6a6a6a" stroke-width="1.400"/><path d="M12.600 15.400l.5-2.900l6.400-6.400l2.400 2.400l-6.400 6.400z" fill="#6a6a6a"/></svg><div class="b" style="left:337.7px;top:111.0px;width:16.4px;height:16.4px;background:#a5c8ef;border-radius:50%"></div><span class="t" style="left:342.30px;top:112px;line-height:15px;font-size:13.19px;color:#17386f;transform:scaleX(0.9883);">2</span><div class="b" style="left:373.8px;top:111.0px;width:16.4px;height:16.4px;background:#a5c8ef;border-radius:50%"></div><span class="t" style="left:378.40px;top:112px;line-height:15px;font-size:13.19px;color:#17386f;transform:scaleX(0.9883);">2</span><div class="b" style="left:369.3px;top:143.3px;width:16.4px;height:16.4px;background:#a5c8ef;border-radius:50%"></div><span class="t" style="left:375.00px;top:144px;line-height:15px;font-size:13.19px;color:#17386f;transform:scaleX(0.9000);"><i class="o">1</i></span><div class="b" style="left:9px;top:147.5px;width:26px;height:26px;border-radius:50%;border:1px solid #fafafb;box-sizing:border-box"></div><svg class="ic" style="left:18.4px;top:156.9px" width="7.200" height="7.200" viewBox="0 0 7.200 7.200"><path d="M3.600 0v7.200M0 3.600h7.200" stroke="#222" stroke-width="1.700"/></svg></article><article class="b card" style="left:8px;top:503px;width:397px;height:184px;border:1px solid #e2e4e7;border-radius:4px"><div class="b" style="left:9px;top:18.2px;width:33px;height:26.3px;background:#d6dade;border:1px solid #bcbfc3;border-radius:2px;box-sizing:border-box"></div><span class="t" style="left:21.24px;top:24px;line-height:16px;font-size:14.0px;color:#1c1c1e;transform:scaleX(1.0555);-webkit-text-stroke:0.35px #1c1c1e;--sw:0.35px;">3</span><h3 class="t" style="left:51.90px;top:21px;line-height:17px;font-size:15.4px;color:#1d1d1f;letter-spacing:0.199px;transform:scaleX(1.0421);-webkit-text-stroke:0.15px #1d1d1f;--sw:0.15px;">Robert Garcia</h3><span class="t" style="left:51.90px;top:42px;line-height:15px;font-size:13.4px;color:#85888b;letter-spacing:0.2px;transform:scaleX(1.0521);-webkit-text-stroke:0.12px #85888b;--sw:0.12px;">7645 Silver Strand Boulevard, San Diego, C...</span><svg class="ic" style="left:363.3px;top:17.7px" width="22.5" height="22.5" viewBox="0 0 22.500 22.500" ><circle cx="11.250" cy="11.250" r="11.200" fill="#999999"/><rect x="4.100" y="5.900" width="14.300" height="12.700" rx="1.300" fill="#949494" stroke="#f3f3f3" stroke-width="1.200"/><path d="M7.300 10.600h8" stroke="#e6e6e6" stroke-width="1.300"/><path d="M7.700 4.300v1.900M14.800 4.300v1.900" stroke="#f0f0f0" stroke-width="1.300"/></svg><div class="b" style="left:9px;top:67.8px;width:172px;height:26.3px;background:#fdfdfd;border:1px solid #e4e4e4;border-radius:14px;box-sizing:border-box;box-shadow:0 0 2px rgba(0,0,0,.08)"></div><svg class="ic" style="left:13.1px;top:71.9px" width="18" height="18" viewBox="0 0 18 18" ><circle cx="9" cy="9" r="8.800" fill="#9a9a9a"/><g fill="none" stroke="#f1f1f1" stroke-width="1.050" stroke-linejoin="round"><path d="M3.400 6.200h7.200v5.800h-7.200z"/><path d="M10.600 7.700h2.300l1.700 2.100v2.200h-4"/></g><circle cx="5.700" cy="12.300" r="1.250" fill="#f1f1f1"/><circle cx="12.300" cy="12.300" r="1.250" fill="#f1f1f1"/><circle cx="7" cy="9.100" r="1.500" fill="none" stroke="#f1f1f1" stroke-width="0.900" stroke-dasharray="1.700 1"/></svg><span class="t" style="left:38.20px;top:73px;line-height:16px;font-size:13.9px;color:#1f1f21;letter-spacing:0.187px;transform:scaleX(1.0483);-webkit-text-stroke:0.3px #1f1f21;--sw:0.3px;">Recurring collection</span><div class="b" style="left:314.2px;top:65.5px;width:71.8px;height:28.6px;background:#fdfdfd;border:1px solid #bbbebe;border-radius:15px;box-sizing:border-box"></div><svg class="ic" style="left:318.8px;top:68.6px" width="22" height="22" viewBox="0 0 22 22" ><circle cx="11" cy="11" r="10.900" fill="#b4b4b4"/><g fill="none" stroke="#fafafa" stroke-width="1.100"><rect x="3" y="5.300" width="16" height="2.900"/><path d="M7 5.300v2.900M11 5.300v2.900M15 5.300v2.900"/></g><path d="M2.700 9.600h16.600l-1.400 7.300h-13.800z" fill="none" stroke="#fafafa" stroke-width="1.300" stroke-linejoin="round"/><rect x="5.400" y="11.400" width="11.200" height="3.900" fill="#a6a6a6"/></svg><span class="t" style="left:347.60px;top:71px;line-height:16px;font-size:14.7px;color:#1d1d1f;transform:scaleX(1.0167);">2</span><svg class="ic" style="left:367.9px;top:77.2px" width="8.8" height="5.2" viewBox="0 0 13.300 7.600" ><path d="M1.200 1.200l5.450 5.200l5.450-5.200" fill="none" stroke="#555" stroke-width="2.5" stroke-linecap="round" stroke-linejoin="round"/></svg><svg class="ic" style="left:321.3px;top:116.5px" width="26" height="25.6" viewBox="0 0 26 25.600" ><path d="M13 1.300c3.200 2.400 6.600 3.200 11.300 3.500v6.200c0 6.200-4.300 11.300-11.300 13.500c-7-2.200-11.300-7.300-11.300-13.500v-6.200c4.700-.3 8.100-1.100 11.300-3.500z" fill="none" stroke="#606060" stroke-width="2.100" stroke-linejoin="round"/><path d="M13 8.800v4.200" stroke="#606060" stroke-width="2.100" stroke-linecap="round"/><circle cx="13" cy="16.600" r="1.250" fill="#606060"/></svg><svg class="ic" style="left:358.6px;top:118.5px" width="23.4" height="22.2" viewBox="0 0 23.400 22.200" ><rect x="1.100" y="1.100" width="21.200" height="20" rx="2.600" fill="none" stroke="#606060" stroke-width="2.100"/><path d="M1.600 16.400l5.800-5.600c.8-.8 1.900-.8 2.700 0l5.300 5.200c1 1 2.400 1.100 3.400 .2l3.300-2.800" fill="none" stroke="#606060" stroke-width="2.100" stroke-linejoin="round"/><circle cx="15.400" cy="6.400" r="1.300" fill="#606060"/></svg><svg class="ic" style="left:326px;top:150.3px" width="21.2" height="21.0" viewBox="0 0 21.200 21" ><path d="M20.200 14.800v-12.400c0-.8-.6-1.400-1.400-1.400h-16.400c-.8 0-1.400 .6-1.400 1.400v16.200c0 .8 .6 1.400 1.400 1.400h12.400" fill="none" stroke="#5a5a5a" stroke-width="1.900"/><path d="M14.400 20.400l6-6h-4.600c-.8 0-1.400 .6-1.400 1.400z" fill="#5a5a5a"/><rect x="5.400" y="6.100" width="9.600" height="10.300" rx="1.400" fill="none" stroke="#5a5a5a" stroke-width="1.500"/><rect x="7.900" y="4.500" width="4.600" height="2.700" rx="1" fill="#fdfdfd" stroke="#5a5a5a" stroke-width="1.300"/><path d="M7.700 10.300h1.100M10 10.300h3M7.700 13.200h1.100M10 13.200h3" stroke="#5a5a5a" stroke-width="1.300"/></svg><svg class="ic" style="left:357.2px;top:153.3px" width="22" height="15.6" viewBox="0 0 22 15.600" ><path d="M13.200 12.300h-11c-.7 0-1.200-.5-1.200-1.200v-8.900c0-.7 .5-1.200 1.200-1.200h15.600c.7 0 1.200 .5 1.200 1.200v2.400" fill="none" stroke="#6a6a6a" stroke-width="1.700"/><text x="5.700" y="9.800" font-family="Liberation Sans, sans-serif" font-weight="bold" font-size="8.500" text-anchor="middle" fill="#6a6a6a">$</text><path d="M9.400 5.300h5.400M9.400 8.300h3.400" stroke="#6a6a6a" stroke-width="1.400"/><path d="M12.600 15.400l.5-2.900l6.400-6.400l2.400 2.400l-6.400 6.400z" fill="#6a6a6a"/></svg><div class="b" style="left:337.7px;top:111.4px;width:16.4px;height:16.4px;background:#a5c8ef;border-radius:50%"></div><span class="t" style="left:342.30px;top:112px;line-height:15px;font-size:13.19px;color:#17386f;transform:scaleX(0.9883);">2</span><div class="b" style="left:373.8px;top:111.4px;width:16.4px;height:16.4px;background:#a5c8ef;border-radius:50%"></div><span class="t" style="left:378.40px;top:112px;line-height:15px;font-size:13.19px;color:#17386f;transform:scaleX(0.9883);">2</span><div class="b" style="left:369.3px;top:143.7px;width:16.4px;height:16.4px;background:#a5c8ef;border-radius:50%"></div><span class="t" style="left:375.00px;top:145px;line-height:15px;font-size:13.19px;color:#17386f;transform:scaleX(0.9000);"><i class="o">1</i></span><div class="b" style="left:9px;top:147.9px;width:26px;height:26px;border-radius:50%;border:1px solid #fafafb;box-sizing:border-box"></div><svg class="ic" style="left:18.4px;top:157.3px" width="7.200" height="7.200" viewBox="0 0 7.200 7.200"><path d="M3.600 0v7.200M0 3.600h7.200" stroke="#222" stroke-width="1.700"/></svg></article></section><section class="b col" style="left:1291px;top:0;width:413px;height:627px"><div class="b" style="left:0px;top:32px;width:413px;height:63.3px;background:#fdfdfe;border-radius:4px 4px 0 0;box-shadow:0 1px 2px rgba(0,0,0,.15),0 1px 9px rgba(0,0,0,.1)"></div><div class="b" style="left:0px;top:31.80000000000001px;width:413px;height:4.4px;background:#4cb4e8;border-radius:4px 4px 0 0"></div><div class="b" style="left:11.0px;top:40.80000000000001px;width:49px;height:49px;border-radius:50%;border:1px solid #f3f4f6;box-sizing:border-box"></div><div class="b" style="left:18.8px;top:48.40000000000001px;width:33.4px;height:33.4px;background:#7ea4d6;border-radius:50%"></div><div class="b" style="left:43.0px;top:48.30000000000001px;width:10.4px;height:10.4px;background:#c4c4c4;border-radius:50%;border:1.500px solid #f8faf8;box-sizing:border-box"></div><span class="t" style="left:25.62px;top:59px;line-height:15px;font-size:13.6px;color:#16182a;letter-spacing:0.032px;transform:scaleX(1.0049);font-weight:bold;">HD</span><h2 class="t" style="left:72.00px;top:44px;line-height:21px;font-size:18.27px;color:#1b1b1d;letter-spacing:0.089px;transform:scaleX(1.0170);">Rolloff Ralph</h2><span class="t" style="left:72.20px;top:66px;line-height:17px;font-size:15.9px;color:#8a8e93;letter-spacing:0.225px;transform:scaleX(1.0472);">22 stops</span><svg class="ic" style="left:316.2px;top:56.89999999999998px" width="18.4" height="16" viewBox="0 0 18.400 16" ><rect x="0" y="0.6" width="18.400" height="1.700" fill="#6a6a6a"/><rect x="3.200" y="7.0" width="12" height="1.700" fill="#6a6a6a"/><rect x="6.800" y="13.5" width="4.800" height="1.700" fill="#6a6a6a"/></svg><div class="b" style="left:338.3px;top:51.10000000000002px;width:9.6px;height:9.6px;background:#126ee0;border-radius:50%"></div><svg class="ic" style="left:366.7px;top:62.19999999999999px" width="20.6" height="4.4" viewBox="0 0 20.6 4.4" ><circle cx="2.2" cy="2.2" r="2.2" fill="#5a5a5a"/><circle cx="10.3" cy="2.2" r="2.2" fill="#5a5a5a"/><circle cx="18.4" cy="2.2" r="2.2" fill="#5a5a5a"/></svg><div class="b" style="left:263px;top:13.599999999999994px;width:134px;height:29px;background:#fdfdfd;border:2px solid #a9a9a9;border-radius:5px;box-sizing:border-box"></div><svg class="ic" style="left:275.8px;top:20.80000000000001px" width="16.6" height="15.4" viewBox="0 0 16.600 15.400" ><path d="M0.300 2.700h12.400M3.700 1.100h5.600" stroke="#6b6b6b" stroke-width="1.700" fill="none"/><path d="M1.300 4.300h10.400v10.400h-10.400z" fill="#6b6b6b"/><path d="M4 6v6.800M6.600 6v6.800" stroke="#fdfdfd" stroke-width="1.100"/><circle cx="11.800" cy="10.600" r="4.600" fill="#6b6b6b" stroke="#fdfdfd" stroke-width="1.200"/><path d="M11.800 8.400v2.400h2" stroke="#fdfdfd" stroke-width="1.100" fill="none"/></svg><span class="t" style="left:303.80px;top:20px;line-height:17px;font-size:15.22px;color:#7c7c7c;letter-spacing:0.176px;transform:scaleX(1.0391);">Not Started</span><article class="b card" style="left:8px;top:119px;width:397px;height:184px;border:1px solid #e2e4e7;border-radius:4px"><div class="b" style="left:9px;top:17.6px;width:33px;height:26.3px;background:#d6dade;border:1px solid #bcbfc3;border-radius:2px;box-sizing:border-box"></div><span class="t" style="left:22.68px;top:23px;line-height:16px;font-size:14.0px;color:#1c1c1e;transform:scaleX(0.9000);-webkit-text-stroke:0.35px #1c1c1e;--sw:0.35px;"><i class="o">1</i></span><h3 class="t" style="left:51.90px;top:20px;line-height:17px;font-size:15.4px;color:#1d1d1f;letter-spacing:0.253px;transform:scaleX(1.0580);-webkit-text-stroke:0.15px #1d1d1f;--sw:0.15px;">Vertex IT Services</h3><span class="t" style="left:51.90px;top:41px;line-height:15px;font-size:13.4px;color:#85888b;letter-spacing:0.194px;transform:scaleX(1.0494);-webkit-text-stroke:0.12px #85888b;--sw:0.12px;">5566 La Jolla Shores Lane, San Diego, CA...</span><svg class="ic" style="left:363.3px;top:17.1px" width="22.5" height="22.5" viewBox="0 0 22.500 22.500" ><circle cx="11.250" cy="11.250" r="11.200" fill="#999999"/><rect x="4.100" y="5.900" width="14.300" height="12.700" rx="1.300" fill="#949494" stroke="#f3f3f3" stroke-width="1.200"/><path d="M7.300 10.600h8" stroke="#e6e6e6" stroke-width="1.300"/><path d="M7.700 4.300v1.900M14.800 4.300v1.900" stroke="#f0f0f0" stroke-width="1.300"/></svg><div class="b" style="left:9px;top:67.2px;width:135.5px;height:26.3px;background:#fdfdfd;border:1px solid #e4e4e4;border-radius:14px;box-sizing:border-box;box-shadow:0 0 2px rgba(0,0,0,.08)"></div><svg class="ic" style="left:13.1px;top:71.3px" width="18" height="18" viewBox="0 0 18 18" ><circle cx="9" cy="9" r="8.800" fill="#9a9a9a"/><g fill="none" stroke="#f4f4f4" stroke-width="1.900"><path d="M4.300 9.700a4.700 4.700 0 0 1 7.300-4.300"/><path d="M13.700 8.300a4.700 4.700 0 0 1-7.300 4.300"/></g><path d="M10.300 2.900l3.700 2.500l-3.900 2.200z" fill="#f4f4f4"/><path d="M7.700 15.100l-3.700-2.500l3.900-2.200z" fill="#f4f4f4"/></svg><span class="t" style="left:38.20px;top:72px;line-height:16px;font-size:13.9px;color:#1f1f21;letter-spacing:0.141px;transform:scaleX(1.0314);-webkit-text-stroke:0.3px #1f1f21;--sw:0.3px;">Dump &amp; return</span><div class="b" style="left:314.2px;top:64.9px;width:71.8px;height:28.6px;background:#fdfdfd;border:1px solid #bbbebe;border-radius:15px;box-sizing:border-box"></div><svg class="ic" style="left:318.8px;top:68.0px" width="22" height="22" viewBox="0 0 22 22" ><circle cx="11" cy="11" r="10.900" fill="#b4b4b4"/><g fill="none" stroke="#fafafa" stroke-width="1.100"><rect x="3" y="5.300" width="16" height="2.900"/><path d="M7 5.300v2.900M11 5.300v2.900M15 5.300v2.900"/></g><path d="M2.700 9.600h16.600l-1.400 7.300h-13.800z" fill="none" stroke="#fafafa" stroke-width="1.300" stroke-linejoin="round"/><rect x="5.400" y="11.400" width="11.200" height="3.900" fill="#a6a6a6"/></svg><span class="t" style="left:347.60px;top:71px;line-height:16px;font-size:14.7px;color:#1d1d1f;transform:scaleX(1.0167);">2</span><svg class="ic" style="left:367.9px;top:76.6px" width="8.8" height="5.2" viewBox="0 0 13.300 7.600" ><path d="M1.200 1.200l5.450 5.200l5.450-5.200" fill="none" stroke="#555" stroke-width="2.5" stroke-linecap="round" stroke-linejoin="round"/></svg><svg class="ic" style="left:321.3px;top:115.9px" width="26" height="25.6" viewBox="0 0 26 25.600" ><path d="M13 1.300c3.200 2.400 6.600 3.200 11.300 3.500v6.200c0 6.200-4.300 11.300-11.300 13.500c-7-2.200-11.300-7.300-11.300-13.500v-6.200c4.700-.3 8.100-1.100 11.300-3.500z" fill="none" stroke="#606060" stroke-width="2.100" stroke-linejoin="round"/><path d="M13 8.800v4.200" stroke="#606060" stroke-width="2.100" stroke-linecap="round"/><circle cx="13" cy="16.600" r="1.250" fill="#606060"/></svg><svg class="ic" style="left:358.6px;top:117.9px" width="23.4" height="22.2" viewBox="0 0 23.400 22.200" ><rect x="1.100" y="1.100" width="21.200" height="20" rx="2.600" fill="none" stroke="#606060" stroke-width="2.100"/><path d="M1.600 16.400l5.800-5.600c.8-.8 1.900-.8 2.700 0l5.300 5.200c1 1 2.400 1.100 3.400 .2l3.300-2.800" fill="none" stroke="#606060" stroke-width="2.100" stroke-linejoin="round"/><circle cx="15.400" cy="6.400" r="1.300" fill="#606060"/></svg><svg class="ic" style="left:326px;top:149.7px" width="21.2" height="21.0" viewBox="0 0 21.200 21" ><path d="M20.200 14.800v-12.400c0-.8-.6-1.400-1.400-1.400h-16.400c-.8 0-1.400 .6-1.400 1.400v16.200c0 .8 .6 1.400 1.400 1.400h12.400" fill="none" stroke="#5a5a5a" stroke-width="1.900"/><path d="M14.400 20.400l6-6h-4.600c-.8 0-1.400 .6-1.400 1.400z" fill="#5a5a5a"/><rect x="5.400" y="6.100" width="9.600" height="10.300" rx="1.400" fill="none" stroke="#5a5a5a" stroke-width="1.500"/><rect x="7.900" y="4.500" width="4.600" height="2.700" rx="1" fill="#fdfdfd" stroke="#5a5a5a" stroke-width="1.300"/><path d="M7.700 10.300h1.100M10 10.300h3M7.700 13.200h1.100M10 13.200h3" stroke="#5a5a5a" stroke-width="1.300"/></svg><svg class="ic" style="left:357.2px;top:152.7px" width="22" height="15.6" viewBox="0 0 22 15.600" ><path d="M13.200 12.300h-11c-.7 0-1.200-.5-1.200-1.200v-8.900c0-.7 .5-1.200 1.200-1.200h15.600c.7 0 1.200 .5 1.200 1.200v2.400" fill="none" stroke="#6a6a6a" stroke-width="1.700"/><text x="5.700" y="9.800" font-family="Liberation Sans, sans-serif" font-weight="bold" font-size="8.500" text-anchor="middle" fill="#6a6a6a">$</text><path d="M9.400 5.300h5.400M9.400 8.300h3.400" stroke="#6a6a6a" stroke-width="1.400"/><path d="M12.600 15.400l.5-2.900l6.400-6.400l2.400 2.400l-6.400 6.400z" fill="#6a6a6a"/></svg><div class="b" style="left:337.7px;top:110.8px;width:16.4px;height:16.4px;background:#a5c8ef;border-radius:50%"></div><span class="t" style="left:342.30px;top:112px;line-height:15px;font-size:13.19px;color:#17386f;transform:scaleX(0.9883);">2</span><div class="b" style="left:373.8px;top:110.8px;width:16.4px;height:16.4px;background:#a5c8ef;border-radius:50%"></div><span class="t" style="left:378.40px;top:112px;line-height:15px;font-size:13.19px;color:#17386f;transform:scaleX(0.9883);">2</span><div class="b" style="left:369.3px;top:143.1px;width:16.4px;height:16.4px;background:#a5c8ef;border-radius:50%"></div><span class="t" style="left:375.00px;top:144px;line-height:15px;font-size:13.19px;color:#17386f;transform:scaleX(0.9000);"><i class="o">1</i></span><div class="b" style="left:9px;top:146.9px;width:91px;height:26.4px;background:#f6c5b2;border-radius:14px"></div><span class="t" style="left:20.30px;top:152px;line-height:16px;font-size:13.9px;color:#3a2418;letter-spacing:0.146px;transform:scaleX(1.0317);-webkit-text-stroke:0.4px #3a2418;--sw:0.4px;">Gate code</span><div class="b" style="left:105.6px;top:147.3px;width:26px;height:26px;border-radius:50%;border:1px solid #fafafb;box-sizing:border-box"></div><svg class="ic" style="left:115.0px;top:156.7px" width="7.200" height="7.200" viewBox="0 0 7.200 7.200"><path d="M3.600 0v7.200M0 3.600h7.200" stroke="#222" stroke-width="1.700"/></svg></article><article class="b card" style="left:8px;top:311px;width:397px;height:184px;border:1px solid #e2e4e7;border-radius:4px"><div class="b" style="left:9px;top:17.8px;width:33px;height:26.3px;background:#d6dade;border:1px solid #bcbfc3;border-radius:2px;box-sizing:border-box"></div><span class="t" style="left:21.31px;top:23px;line-height:16px;font-size:14.0px;color:#1c1c1e;transform:scaleX(1.0450);-webkit-text-stroke:0.35px #1c1c1e;--sw:0.35px;">2</span><h3 class="t" style="left:51.90px;top:20px;line-height:17px;font-size:15.4px;color:#1d1d1f;letter-spacing:0.233px;transform:scaleX(1.0485);-webkit-text-stroke:0.15px #1d1d1f;--sw:0.15px;">Urban Edge Fitness</h3><span class="t" style="left:51.90px;top:41px;line-height:15px;font-size:13.4px;color:#85888b;letter-spacing:0.196px;transform:scaleX(1.0497);-webkit-text-stroke:0.12px #85888b;--sw:0.12px;">5560 La Jolla Shores Lane, San Diego, CA...</span><svg class="ic" style="left:363.3px;top:17.3px" width="22.5" height="22.5" viewBox="0 0 22.500 22.500" ><circle cx="11.250" cy="11.250" r="11.200" fill="#999999"/><rect x="4.100" y="5.900" width="14.300" height="12.700" rx="1.300" fill="#949494" stroke="#f3f3f3" stroke-width="1.200"/><path d="M7.300 10.600h8" stroke="#e6e6e6" stroke-width="1.300"/><path d="M7.700 4.300v1.900M14.800 4.300v1.900" stroke="#f0f0f0" stroke-width="1.300"/></svg><div class="b" style="left:9px;top:67.4px;width:71.5px;height:26.3px;background:#fdfdfd;border:1px solid #e4e4e4;border-radius:14px;box-sizing:border-box;box-shadow:0 0 2px rgba(0,0,0,.08)"></div><svg class="ic" style="left:13.1px;top:71.5px" width="18" height="18" viewBox="0 0 18 18" ><circle cx="9" cy="9" r="8.800" fill="#9a9a9a"/><rect x="2.900" y="3.900" width="12.200" height="1.500" fill="#f6f6f6"/><path d="M5.5 6.5L8.4 9.9H6.5V14.5H4.5V9.9H2.6ZM12.4 6.5L15.3 9.9H13.4V14.5H11.4V9.9H9.5Z" fill="#f6f6f6"/></svg><span class="t" style="left:38.20px;top:72px;line-height:16px;font-size:13.9px;color:#1f1f21;letter-spacing:0.079px;transform:scaleX(1.0201);-webkit-text-stroke:0.3px #1f1f21;--sw:0.3px;">Final</span><div class="b" style="left:314.2px;top:65.1px;width:71.8px;height:28.6px;background:#fdfdfd;border:1px solid #bbbebe;border-radius:15px;box-sizing:border-box"></div><svg class="ic" style="left:318.8px;top:68.2px" width="22" height="22" viewBox="0 0 22 22" ><circle cx="11" cy="11" r="10.900" fill="#b4b4b4"/><g fill="none" stroke="#fafafa" stroke-width="1.100"><rect x="3" y="5.300" width="16" height="2.900"/><path d="M7 5.300v2.900M11 5.300v2.900M15 5.300v2.900"/></g><path d="M2.700 9.600h16.600l-1.400 7.300h-13.800z" fill="none" stroke="#fafafa" stroke-width="1.300" stroke-linejoin="round"/><rect x="5.400" y="11.400" width="11.200" height="3.900" fill="#a6a6a6"/></svg><span class="t" style="left:347.60px;top:71px;line-height:16px;font-size:14.7px;color:#1d1d1f;transform:scaleX(1.0167);">2</span><svg class="ic" style="left:367.9px;top:76.8px" width="8.8" height="5.2" viewBox="0 0 13.300 7.600" ><path d="M1.200 1.200l5.450 5.200l5.450-5.200" fill="none" stroke="#555" stroke-width="2.5" stroke-linecap="round" stroke-linejoin="round"/></svg><svg class="ic" style="left:321.3px;top:116.1px" width="26" height="25.6" viewBox="0 0 26 25.600" ><path d="M13 1.300c3.200 2.400 6.600 3.200 11.300 3.500v6.200c0 6.200-4.300 11.300-11.300 13.500c-7-2.200-11.300-7.300-11.300-13.500v-6.200c4.700-.3 8.100-1.100 11.300-3.500z" fill="none" stroke="#606060" stroke-width="2.100" stroke-linejoin="round"/><path d="M13 8.800v4.200" stroke="#606060" stroke-width="2.100" stroke-linecap="round"/><circle cx="13" cy="16.600" r="1.250" fill="#606060"/></svg><svg class="ic" style="left:358.6px;top:118.1px" width="23.4" height="22.2" viewBox="0 0 23.400 22.200" ><rect x="1.100" y="1.100" width="21.200" height="20" rx="2.600" fill="none" stroke="#606060" stroke-width="2.100"/><path d="M1.600 16.400l5.800-5.600c.8-.8 1.900-.8 2.700 0l5.300 5.200c1 1 2.400 1.100 3.400 .2l3.300-2.800" fill="none" stroke="#606060" stroke-width="2.100" stroke-linejoin="round"/><circle cx="15.400" cy="6.400" r="1.300" fill="#606060"/></svg><svg class="ic" style="left:326px;top:149.9px" width="21.2" height="21.0" viewBox="0 0 21.200 21" ><path d="M20.200 14.800v-12.400c0-.8-.6-1.400-1.400-1.400h-16.400c-.8 0-1.400 .6-1.400 1.400v16.200c0 .8 .6 1.400 1.400 1.400h12.400" fill="none" stroke="#5a5a5a" stroke-width="1.900"/><path d="M14.400 20.400l6-6h-4.600c-.8 0-1.400 .6-1.400 1.400z" fill="#5a5a5a"/><rect x="5.400" y="6.100" width="9.600" height="10.300" rx="1.400" fill="none" stroke="#5a5a5a" stroke-width="1.500"/><rect x="7.900" y="4.500" width="4.600" height="2.700" rx="1" fill="#fdfdfd" stroke="#5a5a5a" stroke-width="1.300"/><path d="M7.700 10.300h1.100M10 10.300h3M7.700 13.200h1.100M10 13.200h3" stroke="#5a5a5a" stroke-width="1.300"/></svg><svg class="ic" style="left:357.2px;top:152.9px" width="22" height="15.6" viewBox="0 0 22 15.600" ><path d="M13.200 12.300h-11c-.7 0-1.200-.5-1.200-1.200v-8.900c0-.7 .5-1.200 1.200-1.200h15.600c.7 0 1.200 .5 1.200 1.200v2.400" fill="none" stroke="#6a6a6a" stroke-width="1.700"/><text x="5.700" y="9.800" font-family="Liberation Sans, sans-serif" font-weight="bold" font-size="8.500" text-anchor="middle" fill="#6a6a6a">$</text><path d="M9.400 5.300h5.400M9.400 8.300h3.400" stroke="#6a6a6a" stroke-width="1.400"/><path d="M12.600 15.400l.5-2.900l6.400-6.400l2.400 2.400l-6.400 6.400z" fill="#6a6a6a"/></svg><div class="b" style="left:337.7px;top:111.0px;width:16.4px;height:16.4px;background:#a5c8ef;border-radius:50%"></div><span class="t" style="left:342.30px;top:112px;line-height:15px;font-size:13.19px;color:#17386f;transform:scaleX(0.9883);">2</span><div class="b" style="left:373.8px;top:111.0px;width:16.4px;height:16.4px;background:#a5c8ef;border-radius:50%"></div><span class="t" style="left:378.40px;top:112px;line-height:15px;font-size:13.19px;color:#17386f;transform:scaleX(0.9883);">2</span><div class="b" style="left:369.3px;top:143.3px;width:16.4px;height:16.4px;background:#a5c8ef;border-radius:50%"></div><span class="t" style="left:375.00px;top:144px;line-height:15px;font-size:13.19px;color:#17386f;transform:scaleX(0.9000);"><i class="o">1</i></span><div class="b" style="left:9px;top:147.5px;width:26px;height:26px;border-radius:50%;border:1px solid #fafafb;box-sizing:border-box"></div><svg class="ic" style="left:18.4px;top:156.9px" width="7.200" height="7.200" viewBox="0 0 7.200 7.200"><path d="M3.600 0v7.200M0 3.600h7.200" stroke="#222" stroke-width="1.700"/></svg></article><article class="b card" style="left:8px;top:503px;width:397px;height:184px;border:1px solid #e2e4e7;border-radius:4px"><div class="b" style="left:9px;top:18.2px;width:33px;height:26.3px;background:#d6dade;border:1px solid #bcbfc3;border-radius:2px;box-sizing:border-box"></div><span class="t" style="left:21.24px;top:24px;line-height:16px;font-size:14.0px;color:#1c1c1e;transform:scaleX(1.0555);-webkit-text-stroke:0.35px #1c1c1e;--sw:0.35px;">3</span><h3 class="t" style="left:51.90px;top:21px;line-height:17px;font-size:15.4px;color:#1d1d1f;letter-spacing:0.224px;transform:scaleX(1.0488);-webkit-text-stroke:0.15px #1d1d1f;--sw:0.15px;">Summit Financial Partners</h3><span class="t" style="left:51.90px;top:42px;line-height:15px;font-size:13.4px;color:#85888b;letter-spacing:0.196px;transform:scaleX(1.0498);-webkit-text-stroke:0.12px #85888b;--sw:0.12px;">5545 La Jolla Shores Lane, San Diego, CA...</span><svg class="ic" style="left:363.3px;top:17.7px" width="22.5" height="22.5" viewBox="0 0 22.500 22.500" ><circle cx="11.250" cy="11.250" r="11.200" fill="#999999"/><rect x="4.100" y="5.900" width="14.300" height="12.700" rx="1.300" fill="#949494" stroke="#f3f3f3" stroke-width="1.200"/><path d="M7.300 10.600h8" stroke="#e6e6e6" stroke-width="1.300"/><path d="M7.700 4.300v1.900M14.800 4.300v1.900" stroke="#f0f0f0" stroke-width="1.300"/></svg><div class="b" style="left:9px;top:67.8px;width:73px;height:26.3px;background:#fdfdfd;border:1px solid #e4e4e4;border-radius:14px;box-sizing:border-box;box-shadow:0 0 2px rgba(0,0,0,.08)"></div><svg class="ic" style="left:13.1px;top:71.9px" width="18" height="18" viewBox="0 0 18 18" ><circle cx="9" cy="9" r="8.800" fill="#9a9a9a"/><rect x="2.900" y="13.600" width="12.200" height="1.500" fill="#f6f6f6"/><path d="M5.5 12L8.4 8.6H6.5V4H4.5V8.6H2.6ZM12.4 12L15.3 8.6H13.4V4H11.4V8.6H9.5Z" fill="#f6f6f6"/></svg><span class="t" style="left:38.20px;top:73px;line-height:16px;font-size:13.9px;color:#1f1f21;letter-spacing:0.163px;transform:scaleX(1.0335);-webkit-text-stroke:0.3px #1f1f21;--sw:0.3px;">Drop</span><div class="b" style="left:314.2px;top:65.5px;width:71.8px;height:28.6px;background:#fdfdfd;border:1px solid #bbbebe;border-radius:15px;box-sizing:border-box"></div><svg class="ic" style="left:318.8px;top:68.6px" width="22" height="22" viewBox="0 0 22 22" ><circle cx="11" cy="11" r="10.900" fill="#b4b4b4"/><g fill="none" stroke="#fafafa" stroke-width="1.100"><rect x="3" y="5.300" width="16" height="2.900"/><path d="M7 5.300v2.900M11 5.300v2.900M15 5.300v2.900"/></g><path d="M2.700 9.600h16.600l-1.400 7.300h-13.800z" fill="none" stroke="#fafafa" stroke-width="1.300" stroke-linejoin="round"/><rect x="5.400" y="11.400" width="11.200" height="3.900" fill="#a6a6a6"/></svg><span class="t" style="left:347.60px;top:71px;line-height:16px;font-size:14.7px;color:#1d1d1f;transform:scaleX(1.0167);">2</span><svg class="ic" style="left:367.9px;top:77.2px" width="8.8" height="5.2" viewBox="0 0 13.300 7.600" ><path d="M1.200 1.200l5.450 5.200l5.450-5.200" fill="none" stroke="#555" stroke-width="2.5" stroke-linecap="round" stroke-linejoin="round"/></svg><svg class="ic" style="left:321.3px;top:116.5px" width="26" height="25.6" viewBox="0 0 26 25.600" ><path d="M13 1.300c3.200 2.400 6.600 3.200 11.300 3.500v6.200c0 6.200-4.300 11.300-11.300 13.500c-7-2.200-11.300-7.300-11.300-13.500v-6.200c4.700-.3 8.100-1.100 11.300-3.500z" fill="none" stroke="#606060" stroke-width="2.100" stroke-linejoin="round"/><path d="M13 8.800v4.200" stroke="#606060" stroke-width="2.100" stroke-linecap="round"/><circle cx="13" cy="16.600" r="1.250" fill="#606060"/></svg><svg class="ic" style="left:358.6px;top:118.5px" width="23.4" height="22.2" viewBox="0 0 23.400 22.200" ><rect x="1.100" y="1.100" width="21.200" height="20" rx="2.600" fill="none" stroke="#606060" stroke-width="2.100"/><path d="M1.600 16.400l5.800-5.600c.8-.8 1.900-.8 2.700 0l5.300 5.200c1 1 2.400 1.100 3.400 .2l3.300-2.800" fill="none" stroke="#606060" stroke-width="2.100" stroke-linejoin="round"/><circle cx="15.400" cy="6.400" r="1.300" fill="#606060"/></svg><svg class="ic" style="left:326px;top:150.3px" width="21.2" height="21.0" viewBox="0 0 21.200 21" ><path d="M20.200 14.800v-12.400c0-.8-.6-1.400-1.400-1.400h-16.400c-.8 0-1.400 .6-1.400 1.400v16.200c0 .8 .6 1.400 1.400 1.400h12.400" fill="none" stroke="#5a5a5a" stroke-width="1.900"/><path d="M14.400 20.400l6-6h-4.600c-.8 0-1.400 .6-1.400 1.400z" fill="#5a5a5a"/><rect x="5.400" y="6.100" width="9.600" height="10.300" rx="1.400" fill="none" stroke="#5a5a5a" stroke-width="1.500"/><rect x="7.900" y="4.500" width="4.600" height="2.700" rx="1" fill="#fdfdfd" stroke="#5a5a5a" stroke-width="1.300"/><path d="M7.700 10.300h1.100M10 10.300h3M7.700 13.200h1.100M10 13.200h3" stroke="#5a5a5a" stroke-width="1.300"/></svg><svg class="ic" style="left:357.2px;top:153.3px" width="22" height="15.6" viewBox="0 0 22 15.600" ><path d="M13.200 12.300h-11c-.7 0-1.200-.5-1.200-1.200v-8.900c0-.7 .5-1.200 1.200-1.200h15.600c.7 0 1.200 .5 1.200 1.200v2.400" fill="none" stroke="#6a6a6a" stroke-width="1.700"/><text x="5.700" y="9.800" font-family="Liberation Sans, sans-serif" font-weight="bold" font-size="8.500" text-anchor="middle" fill="#6a6a6a">$</text><path d="M9.400 5.300h5.400M9.400 8.300h3.400" stroke="#6a6a6a" stroke-width="1.400"/><path d="M12.600 15.400l.5-2.900l6.400-6.400l2.400 2.400l-6.400 6.400z" fill="#6a6a6a"/></svg><div class="b" style="left:337.7px;top:111.4px;width:16.4px;height:16.4px;background:#a5c8ef;border-radius:50%"></div><span class="t" style="left:342.30px;top:112px;line-height:15px;font-size:13.19px;color:#17386f;transform:scaleX(0.9883);">2</span><div class="b" style="left:373.8px;top:111.4px;width:16.4px;height:16.4px;background:#a5c8ef;border-radius:50%"></div><span class="t" style="left:378.40px;top:112px;line-height:15px;font-size:13.19px;color:#17386f;transform:scaleX(0.9883);">2</span><div class="b" style="left:369.3px;top:143.7px;width:16.4px;height:16.4px;background:#a5c8ef;border-radius:50%"></div><span class="t" style="left:375.00px;top:145px;line-height:15px;font-size:13.19px;color:#17386f;transform:scaleX(0.9000);"><i class="o">1</i></span><div class="b" style="left:9px;top:147.9px;width:26px;height:26px;border-radius:50%;border:1px solid #fafafb;box-sizing:border-box"></div><svg class="ic" style="left:18.4px;top:157.3px" width="7.200" height="7.200" viewBox="0 0 7.200 7.200"><path d="M3.600 0v7.200M0 3.600h7.200" stroke="#222" stroke-width="1.700"/></svg></article></section></main><svg class="ic" style="left:809.0px;top:556.2px" width="13.6" height="19.9" viewBox="0 0 13 19" ><path d="M1 0.800v14.600l3.400-3.100l2.500 5.700l2.600-1.100l-2.600-5.600h4.700z" fill="#0a0a0a" stroke="#fff" stroke-width="1" stroke-linejoin="round"/></svg></div></body></html>
